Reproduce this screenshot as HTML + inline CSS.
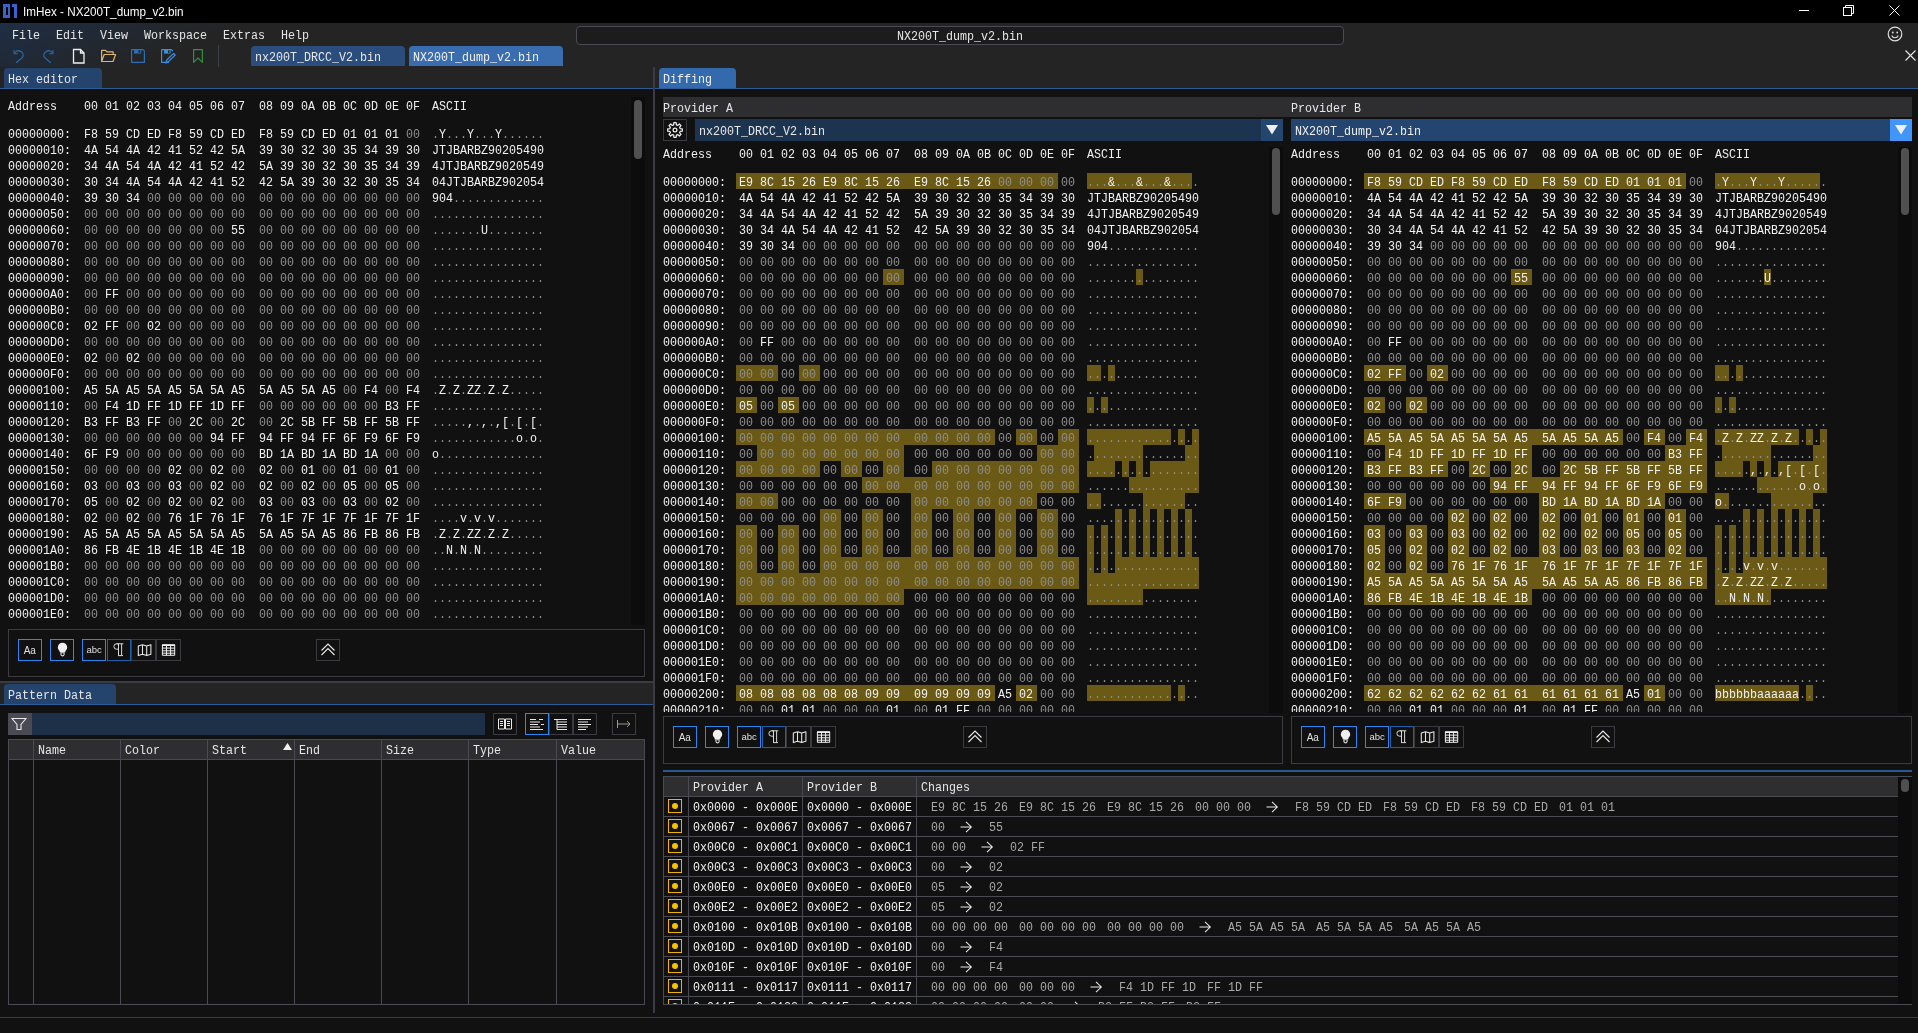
<!DOCTYPE html><html><head><meta charset="utf-8"><style>
html,body{margin:0;padding:0;}
body{width:1918px;height:1033px;overflow:hidden;background:#111111;position:relative;}
.m{position:absolute;font-family:"Liberation Mono",monospace;font-size:13.66px;line-height:16px;white-space:pre;transform:scaleX(0.854);transform-origin:0 0;}
.s{position:absolute;font-family:"Liberation Sans",sans-serif;line-height:16px;white-space:pre;}
div{box-sizing:border-box;}
svg{position:absolute;overflow:visible;}
</style></head><body><div style="position:absolute;left:0;top:0;width:1918px;height:1033px;overflow:hidden;will-change:transform">
<div style="position:absolute;left:0px;top:0px;width:1918px;height:23px;background:#000"></div>
<svg style="left:0;top:0" width="24" height="23"><path d="M3 4h7v14h-7z M6 7v8h2v-8z" fill="#3a62cc" fill-rule="evenodd"/><path d="M12 4h5v14h-3v-11h-2z" fill="#3a62cc"/></svg>
<div class="s" style="left:23px;top:3.5px;font-size:13px;color:#fff;transform:scaleX(0.9);transform-origin:0 0;">ImHex - NX200T_dump_v2.bin</div>
<div style="position:absolute;left:1799px;top:10px;width:10px;height:1px;background:#fff"></div>
<svg style="left:1843px;top:5px" width="12" height="12"><rect x="0.5" y="2.5" width="8" height="8" fill="none" stroke="#fff"/><path d="M2.5 2.5v-2h8v8h-2" fill="none" stroke="#fff"/></svg>
<svg style="left:1889px;top:5px" width="12" height="12"><path d="M0.5 0.5l10 10M10.5 0.5l-10 10" stroke="#fff" stroke-width="1"/></svg>
<div style="position:absolute;left:0px;top:23px;width:1918px;height:44px;background:linear-gradient(160deg,#1f2e45 0px,#202a38 35px,#23272c 65px,#242424 85px)"></div>
<div class="m" style="left:12px;top:28px;color:#e6e6e6;">File</div>
<div class="m" style="left:56px;top:28px;color:#e6e6e6;">Edit</div>
<div class="m" style="left:100px;top:28px;color:#e6e6e6;">View</div>
<div class="m" style="left:144px;top:28px;color:#e6e6e6;">Workspace</div>
<div class="m" style="left:223px;top:28px;color:#e6e6e6;">Extras</div>
<div class="m" style="left:281px;top:28px;color:#e6e6e6;">Help</div>
<svg style="left:0;top:0" width="70" height="70"><g fill="none" stroke="#2a66a3" stroke-width="1.3"><path d="M14 50V53.8H17.8" stroke-width="1.1"/><path d="M14.6 53.2A4.5 4.5 0 0 1 22.6 57.4L16.2 62.8"/><path d="M53 50V53.8H49.2" stroke-width="1.1"/><path d="M52.4 53.2A4.5 4.5 0 0 0 44.4 57.4L50.8 62.8"/></g></svg>
<svg style="left:72px;top:48px" width="14" height="16"><path d="M1.5 1.5h7l3.5 3.5v10h-10.5z M8.5 1.5v3.5h3.5" fill="none" stroke="#f0f0f0" stroke-width="1.3"/></svg>
<svg style="left:0;top:0" width="210" height="70"><g fill="none" stroke-width="1.2" stroke-linejoin="round"><path d="M101.6 61.5V50.3H105.5L107 51.8H113.2V54.5 M101.6 61.5L104.2 54.5H115.6L113 61.5Z" stroke="#e0b46a"/><path d="M131.6 49.6H143L144.4 51V62.4H131.6Z" stroke="#2c6db3"/><path d="M169 62.4H161.6V49.6H171.5L173 51" stroke="#3a8fe0"/><path d="M166 63L166.8 60L173.5 53.3L175.2 55L168.5 61.7Z" stroke="#3a8fe0"/><path d="M193.6 49.6H202.4V62.4L198 58L193.6 62.4Z" stroke="#3b8a42"/></g><rect x="134" y="49.6" width="7.2" height="4" fill="#2c6db3"/><rect x="138.5" y="50.3" width="1.6" height="2.6" fill="#232425"/><rect x="164" y="49.6" width="6.5" height="4" fill="#3a8fe0"/><rect x="168" y="50.3" width="1.5" height="2.6" fill="#232425"/></svg>
<div style="position:absolute;left:218px;top:45px;width:1px;height:22px;background:#3a3f48"></div>
<div style="position:absolute;left:251px;top:46px;width:154px;height:20px;background:#2a4d7d;border-radius:4px 4px 0 0"></div>
<div class="m" style="left:255px;top:50px;color:#e8e8e8;">nx200T_DRCC_V2.bin</div>
<div style="position:absolute;left:409px;top:46px;width:154px;height:20px;background:#3a6db0;border-radius:4px 4px 0 0"></div>
<div class="m" style="left:413px;top:50px;color:#f0f0f0;">NX200T_dump_v2.bin</div>
<div style="position:absolute;left:576px;top:26px;width:768px;height:19px;border:1px solid #4a4a54;border-radius:4px;background:#1c1c1c"></div>
<div class="m" style="left:897px;top:29px;color:#e6e6e6;">NX200T_dump_v2.bin</div>
<svg style="left:1887px;top:26px" width="16" height="16"><circle cx="8" cy="8" r="6.8" fill="none" stroke="#e0e0e0" stroke-width="1.2"/><circle cx="5.8" cy="6.5" r="0.9" fill="#e0e0e0"/><circle cx="10.2" cy="6.5" r="0.9" fill="#e0e0e0"/><path d="M4.8 9.5a3.4 3.4 0 0 0 6.4 0" fill="none" stroke="#e0e0e0" stroke-width="1.1"/></svg>
<svg style="left:1905px;top:50px" width="12" height="12"><path d="M0.5 0.5l10 10M10.5 0.5l-10 10" stroke="#e8e8e8" stroke-width="1.1"/></svg>
<div style="position:absolute;left:0px;top:67px;width:1918px;height:21px;background:#242424"></div>
<div style="position:absolute;left:0px;top:88px;width:1918px;height:1px;background:#2a5d98"></div>
<div style="position:absolute;left:4px;top:68px;width:98px;height:20px;background:#24446e;border-radius:4px 4px 0 0"></div>
<div class="m" style="left:8px;top:72px;color:#e6e6e6;">Hex editor</div>
<div style="position:absolute;left:659px;top:68px;width:77px;height:20px;background:#3369ad;border-radius:4px 4px 0 0"></div>
<div class="m" style="left:663px;top:71.5px;color:#f0f0f0;">Diffing</div>
<div style="position:absolute;left:653px;top:67px;width:2px;height:946px;background:#3b3b45"></div>
<div class="m" style="left:8px;top:99px;color:#f0f0f0;">Address</div>
<div class="m" style="left:84px;top:99px;color:#f0f0f0;">00 01 02 03 04 05 06 07  08 09 0A 0B 0C 0D 0E 0F</div>
<div class="m" style="left:432px;top:99px;color:#f0f0f0;">ASCII</div>
<div class="m" style="left:8px;top:127px;color:#f2f2f2;">00000000:</div>
<div class="m" style="left:84px;top:127px;color:#f2f2f2;"><span style="color:#f2f2f2">F8</span> <span style="color:#f2f2f2">59</span> <span style="color:#f2f2f2">CD</span> <span style="color:#f2f2f2">ED</span> <span style="color:#f2f2f2">F8</span> <span style="color:#f2f2f2">59</span> <span style="color:#f2f2f2">CD</span> <span style="color:#f2f2f2">ED</span>  <span style="color:#f2f2f2">F8</span> <span style="color:#f2f2f2">59</span> <span style="color:#f2f2f2">CD</span> <span style="color:#f2f2f2">ED</span> <span style="color:#f2f2f2">01</span> <span style="color:#f2f2f2">01</span> <span style="color:#f2f2f2">01</span> <span style="color:#8e8e8e">00</span></div>
<div class="m" style="left:432px;top:127px;color:#f2f2f2;"><span style="color:#8e8e8e">.</span><span style="color:#f2f2f2">Y</span><span style="color:#8e8e8e">...</span><span style="color:#f2f2f2">Y</span><span style="color:#8e8e8e">...</span><span style="color:#f2f2f2">Y</span><span style="color:#8e8e8e">......</span></div>
<div class="m" style="left:8px;top:143px;color:#f2f2f2;">00000010:</div>
<div class="m" style="left:84px;top:143px;color:#f2f2f2;"><span style="color:#f2f2f2">4A</span> <span style="color:#f2f2f2">54</span> <span style="color:#f2f2f2">4A</span> <span style="color:#f2f2f2">42</span> <span style="color:#f2f2f2">41</span> <span style="color:#f2f2f2">52</span> <span style="color:#f2f2f2">42</span> <span style="color:#f2f2f2">5A</span>  <span style="color:#f2f2f2">39</span> <span style="color:#f2f2f2">30</span> <span style="color:#f2f2f2">32</span> <span style="color:#f2f2f2">30</span> <span style="color:#f2f2f2">35</span> <span style="color:#f2f2f2">34</span> <span style="color:#f2f2f2">39</span> <span style="color:#f2f2f2">30</span></div>
<div class="m" style="left:432px;top:143px;color:#f2f2f2;"><span style="color:#f2f2f2">JTJBARBZ90205490</span></div>
<div class="m" style="left:8px;top:159px;color:#f2f2f2;">00000020:</div>
<div class="m" style="left:84px;top:159px;color:#f2f2f2;"><span style="color:#f2f2f2">34</span> <span style="color:#f2f2f2">4A</span> <span style="color:#f2f2f2">54</span> <span style="color:#f2f2f2">4A</span> <span style="color:#f2f2f2">42</span> <span style="color:#f2f2f2">41</span> <span style="color:#f2f2f2">52</span> <span style="color:#f2f2f2">42</span>  <span style="color:#f2f2f2">5A</span> <span style="color:#f2f2f2">39</span> <span style="color:#f2f2f2">30</span> <span style="color:#f2f2f2">32</span> <span style="color:#f2f2f2">30</span> <span style="color:#f2f2f2">35</span> <span style="color:#f2f2f2">34</span> <span style="color:#f2f2f2">39</span></div>
<div class="m" style="left:432px;top:159px;color:#f2f2f2;"><span style="color:#f2f2f2">4JTJBARBZ9020549</span></div>
<div class="m" style="left:8px;top:175px;color:#f2f2f2;">00000030:</div>
<div class="m" style="left:84px;top:175px;color:#f2f2f2;"><span style="color:#f2f2f2">30</span> <span style="color:#f2f2f2">34</span> <span style="color:#f2f2f2">4A</span> <span style="color:#f2f2f2">54</span> <span style="color:#f2f2f2">4A</span> <span style="color:#f2f2f2">42</span> <span style="color:#f2f2f2">41</span> <span style="color:#f2f2f2">52</span>  <span style="color:#f2f2f2">42</span> <span style="color:#f2f2f2">5A</span> <span style="color:#f2f2f2">39</span> <span style="color:#f2f2f2">30</span> <span style="color:#f2f2f2">32</span> <span style="color:#f2f2f2">30</span> <span style="color:#f2f2f2">35</span> <span style="color:#f2f2f2">34</span></div>
<div class="m" style="left:432px;top:175px;color:#f2f2f2;"><span style="color:#f2f2f2">04JTJBARBZ902054</span></div>
<div class="m" style="left:8px;top:191px;color:#f2f2f2;">00000040:</div>
<div class="m" style="left:84px;top:191px;color:#f2f2f2;"><span style="color:#f2f2f2">39</span> <span style="color:#f2f2f2">30</span> <span style="color:#f2f2f2">34</span> <span style="color:#8e8e8e">00</span> <span style="color:#8e8e8e">00</span> <span style="color:#8e8e8e">00</span> <span style="color:#8e8e8e">00</span> <span style="color:#8e8e8e">00</span>  <span style="color:#8e8e8e">00</span> <span style="color:#8e8e8e">00</span> <span style="color:#8e8e8e">00</span> <span style="color:#8e8e8e">00</span> <span style="color:#8e8e8e">00</span> <span style="color:#8e8e8e">00</span> <span style="color:#8e8e8e">00</span> <span style="color:#8e8e8e">00</span></div>
<div class="m" style="left:432px;top:191px;color:#f2f2f2;"><span style="color:#f2f2f2">904</span><span style="color:#8e8e8e">.............</span></div>
<div class="m" style="left:8px;top:207px;color:#f2f2f2;">00000050:</div>
<div class="m" style="left:84px;top:207px;color:#f2f2f2;"><span style="color:#8e8e8e">00</span> <span style="color:#8e8e8e">00</span> <span style="color:#8e8e8e">00</span> <span style="color:#8e8e8e">00</span> <span style="color:#8e8e8e">00</span> <span style="color:#8e8e8e">00</span> <span style="color:#8e8e8e">00</span> <span style="color:#8e8e8e">00</span>  <span style="color:#8e8e8e">00</span> <span style="color:#8e8e8e">00</span> <span style="color:#8e8e8e">00</span> <span style="color:#8e8e8e">00</span> <span style="color:#8e8e8e">00</span> <span style="color:#8e8e8e">00</span> <span style="color:#8e8e8e">00</span> <span style="color:#8e8e8e">00</span></div>
<div class="m" style="left:432px;top:207px;color:#f2f2f2;"><span style="color:#8e8e8e">................</span></div>
<div class="m" style="left:8px;top:223px;color:#f2f2f2;">00000060:</div>
<div class="m" style="left:84px;top:223px;color:#f2f2f2;"><span style="color:#8e8e8e">00</span> <span style="color:#8e8e8e">00</span> <span style="color:#8e8e8e">00</span> <span style="color:#8e8e8e">00</span> <span style="color:#8e8e8e">00</span> <span style="color:#8e8e8e">00</span> <span style="color:#8e8e8e">00</span> <span style="color:#f2f2f2">55</span>  <span style="color:#8e8e8e">00</span> <span style="color:#8e8e8e">00</span> <span style="color:#8e8e8e">00</span> <span style="color:#8e8e8e">00</span> <span style="color:#8e8e8e">00</span> <span style="color:#8e8e8e">00</span> <span style="color:#8e8e8e">00</span> <span style="color:#8e8e8e">00</span></div>
<div class="m" style="left:432px;top:223px;color:#f2f2f2;"><span style="color:#8e8e8e">.......</span><span style="color:#f2f2f2">U</span><span style="color:#8e8e8e">........</span></div>
<div class="m" style="left:8px;top:239px;color:#f2f2f2;">00000070:</div>
<div class="m" style="left:84px;top:239px;color:#f2f2f2;"><span style="color:#8e8e8e">00</span> <span style="color:#8e8e8e">00</span> <span style="color:#8e8e8e">00</span> <span style="color:#8e8e8e">00</span> <span style="color:#8e8e8e">00</span> <span style="color:#8e8e8e">00</span> <span style="color:#8e8e8e">00</span> <span style="color:#8e8e8e">00</span>  <span style="color:#8e8e8e">00</span> <span style="color:#8e8e8e">00</span> <span style="color:#8e8e8e">00</span> <span style="color:#8e8e8e">00</span> <span style="color:#8e8e8e">00</span> <span style="color:#8e8e8e">00</span> <span style="color:#8e8e8e">00</span> <span style="color:#8e8e8e">00</span></div>
<div class="m" style="left:432px;top:239px;color:#f2f2f2;"><span style="color:#8e8e8e">................</span></div>
<div class="m" style="left:8px;top:255px;color:#f2f2f2;">00000080:</div>
<div class="m" style="left:84px;top:255px;color:#f2f2f2;"><span style="color:#8e8e8e">00</span> <span style="color:#8e8e8e">00</span> <span style="color:#8e8e8e">00</span> <span style="color:#8e8e8e">00</span> <span style="color:#8e8e8e">00</span> <span style="color:#8e8e8e">00</span> <span style="color:#8e8e8e">00</span> <span style="color:#8e8e8e">00</span>  <span style="color:#8e8e8e">00</span> <span style="color:#8e8e8e">00</span> <span style="color:#8e8e8e">00</span> <span style="color:#8e8e8e">00</span> <span style="color:#8e8e8e">00</span> <span style="color:#8e8e8e">00</span> <span style="color:#8e8e8e">00</span> <span style="color:#8e8e8e">00</span></div>
<div class="m" style="left:432px;top:255px;color:#f2f2f2;"><span style="color:#8e8e8e">................</span></div>
<div class="m" style="left:8px;top:271px;color:#f2f2f2;">00000090:</div>
<div class="m" style="left:84px;top:271px;color:#f2f2f2;"><span style="color:#8e8e8e">00</span> <span style="color:#8e8e8e">00</span> <span style="color:#8e8e8e">00</span> <span style="color:#8e8e8e">00</span> <span style="color:#8e8e8e">00</span> <span style="color:#8e8e8e">00</span> <span style="color:#8e8e8e">00</span> <span style="color:#8e8e8e">00</span>  <span style="color:#8e8e8e">00</span> <span style="color:#8e8e8e">00</span> <span style="color:#8e8e8e">00</span> <span style="color:#8e8e8e">00</span> <span style="color:#8e8e8e">00</span> <span style="color:#8e8e8e">00</span> <span style="color:#8e8e8e">00</span> <span style="color:#8e8e8e">00</span></div>
<div class="m" style="left:432px;top:271px;color:#f2f2f2;"><span style="color:#8e8e8e">................</span></div>
<div class="m" style="left:8px;top:287px;color:#f2f2f2;">000000A0:</div>
<div class="m" style="left:84px;top:287px;color:#f2f2f2;"><span style="color:#8e8e8e">00</span> <span style="color:#f2f2f2">FF</span> <span style="color:#8e8e8e">00</span> <span style="color:#8e8e8e">00</span> <span style="color:#8e8e8e">00</span> <span style="color:#8e8e8e">00</span> <span style="color:#8e8e8e">00</span> <span style="color:#8e8e8e">00</span>  <span style="color:#8e8e8e">00</span> <span style="color:#8e8e8e">00</span> <span style="color:#8e8e8e">00</span> <span style="color:#8e8e8e">00</span> <span style="color:#8e8e8e">00</span> <span style="color:#8e8e8e">00</span> <span style="color:#8e8e8e">00</span> <span style="color:#8e8e8e">00</span></div>
<div class="m" style="left:432px;top:287px;color:#f2f2f2;"><span style="color:#8e8e8e">................</span></div>
<div class="m" style="left:8px;top:303px;color:#f2f2f2;">000000B0:</div>
<div class="m" style="left:84px;top:303px;color:#f2f2f2;"><span style="color:#8e8e8e">00</span> <span style="color:#8e8e8e">00</span> <span style="color:#8e8e8e">00</span> <span style="color:#8e8e8e">00</span> <span style="color:#8e8e8e">00</span> <span style="color:#8e8e8e">00</span> <span style="color:#8e8e8e">00</span> <span style="color:#8e8e8e">00</span>  <span style="color:#8e8e8e">00</span> <span style="color:#8e8e8e">00</span> <span style="color:#8e8e8e">00</span> <span style="color:#8e8e8e">00</span> <span style="color:#8e8e8e">00</span> <span style="color:#8e8e8e">00</span> <span style="color:#8e8e8e">00</span> <span style="color:#8e8e8e">00</span></div>
<div class="m" style="left:432px;top:303px;color:#f2f2f2;"><span style="color:#8e8e8e">................</span></div>
<div class="m" style="left:8px;top:319px;color:#f2f2f2;">000000C0:</div>
<div class="m" style="left:84px;top:319px;color:#f2f2f2;"><span style="color:#f2f2f2">02</span> <span style="color:#f2f2f2">FF</span> <span style="color:#8e8e8e">00</span> <span style="color:#f2f2f2">02</span> <span style="color:#8e8e8e">00</span> <span style="color:#8e8e8e">00</span> <span style="color:#8e8e8e">00</span> <span style="color:#8e8e8e">00</span>  <span style="color:#8e8e8e">00</span> <span style="color:#8e8e8e">00</span> <span style="color:#8e8e8e">00</span> <span style="color:#8e8e8e">00</span> <span style="color:#8e8e8e">00</span> <span style="color:#8e8e8e">00</span> <span style="color:#8e8e8e">00</span> <span style="color:#8e8e8e">00</span></div>
<div class="m" style="left:432px;top:319px;color:#f2f2f2;"><span style="color:#8e8e8e">................</span></div>
<div class="m" style="left:8px;top:335px;color:#f2f2f2;">000000D0:</div>
<div class="m" style="left:84px;top:335px;color:#f2f2f2;"><span style="color:#8e8e8e">00</span> <span style="color:#8e8e8e">00</span> <span style="color:#8e8e8e">00</span> <span style="color:#8e8e8e">00</span> <span style="color:#8e8e8e">00</span> <span style="color:#8e8e8e">00</span> <span style="color:#8e8e8e">00</span> <span style="color:#8e8e8e">00</span>  <span style="color:#8e8e8e">00</span> <span style="color:#8e8e8e">00</span> <span style="color:#8e8e8e">00</span> <span style="color:#8e8e8e">00</span> <span style="color:#8e8e8e">00</span> <span style="color:#8e8e8e">00</span> <span style="color:#8e8e8e">00</span> <span style="color:#8e8e8e">00</span></div>
<div class="m" style="left:432px;top:335px;color:#f2f2f2;"><span style="color:#8e8e8e">................</span></div>
<div class="m" style="left:8px;top:351px;color:#f2f2f2;">000000E0:</div>
<div class="m" style="left:84px;top:351px;color:#f2f2f2;"><span style="color:#f2f2f2">02</span> <span style="color:#8e8e8e">00</span> <span style="color:#f2f2f2">02</span> <span style="color:#8e8e8e">00</span> <span style="color:#8e8e8e">00</span> <span style="color:#8e8e8e">00</span> <span style="color:#8e8e8e">00</span> <span style="color:#8e8e8e">00</span>  <span style="color:#8e8e8e">00</span> <span style="color:#8e8e8e">00</span> <span style="color:#8e8e8e">00</span> <span style="color:#8e8e8e">00</span> <span style="color:#8e8e8e">00</span> <span style="color:#8e8e8e">00</span> <span style="color:#8e8e8e">00</span> <span style="color:#8e8e8e">00</span></div>
<div class="m" style="left:432px;top:351px;color:#f2f2f2;"><span style="color:#8e8e8e">................</span></div>
<div class="m" style="left:8px;top:367px;color:#f2f2f2;">000000F0:</div>
<div class="m" style="left:84px;top:367px;color:#f2f2f2;"><span style="color:#8e8e8e">00</span> <span style="color:#8e8e8e">00</span> <span style="color:#8e8e8e">00</span> <span style="color:#8e8e8e">00</span> <span style="color:#8e8e8e">00</span> <span style="color:#8e8e8e">00</span> <span style="color:#8e8e8e">00</span> <span style="color:#8e8e8e">00</span>  <span style="color:#8e8e8e">00</span> <span style="color:#8e8e8e">00</span> <span style="color:#8e8e8e">00</span> <span style="color:#8e8e8e">00</span> <span style="color:#8e8e8e">00</span> <span style="color:#8e8e8e">00</span> <span style="color:#8e8e8e">00</span> <span style="color:#8e8e8e">00</span></div>
<div class="m" style="left:432px;top:367px;color:#f2f2f2;"><span style="color:#8e8e8e">................</span></div>
<div class="m" style="left:8px;top:383px;color:#f2f2f2;">00000100:</div>
<div class="m" style="left:84px;top:383px;color:#f2f2f2;"><span style="color:#f2f2f2">A5</span> <span style="color:#f2f2f2">5A</span> <span style="color:#f2f2f2">A5</span> <span style="color:#f2f2f2">5A</span> <span style="color:#f2f2f2">A5</span> <span style="color:#f2f2f2">5A</span> <span style="color:#f2f2f2">5A</span> <span style="color:#f2f2f2">A5</span>  <span style="color:#f2f2f2">5A</span> <span style="color:#f2f2f2">A5</span> <span style="color:#f2f2f2">5A</span> <span style="color:#f2f2f2">A5</span> <span style="color:#8e8e8e">00</span> <span style="color:#f2f2f2">F4</span> <span style="color:#8e8e8e">00</span> <span style="color:#f2f2f2">F4</span></div>
<div class="m" style="left:432px;top:383px;color:#f2f2f2;"><span style="color:#8e8e8e">.</span><span style="color:#f2f2f2">Z</span><span style="color:#8e8e8e">.</span><span style="color:#f2f2f2">Z</span><span style="color:#8e8e8e">.</span><span style="color:#f2f2f2">ZZ</span><span style="color:#8e8e8e">.</span><span style="color:#f2f2f2">Z</span><span style="color:#8e8e8e">.</span><span style="color:#f2f2f2">Z</span><span style="color:#8e8e8e">.....</span></div>
<div class="m" style="left:8px;top:399px;color:#f2f2f2;">00000110:</div>
<div class="m" style="left:84px;top:399px;color:#f2f2f2;"><span style="color:#8e8e8e">00</span> <span style="color:#f2f2f2">F4</span> <span style="color:#f2f2f2">1D</span> <span style="color:#f2f2f2">FF</span> <span style="color:#f2f2f2">1D</span> <span style="color:#f2f2f2">FF</span> <span style="color:#f2f2f2">1D</span> <span style="color:#f2f2f2">FF</span>  <span style="color:#8e8e8e">00</span> <span style="color:#8e8e8e">00</span> <span style="color:#8e8e8e">00</span> <span style="color:#8e8e8e">00</span> <span style="color:#8e8e8e">00</span> <span style="color:#8e8e8e">00</span> <span style="color:#f2f2f2">B3</span> <span style="color:#f2f2f2">FF</span></div>
<div class="m" style="left:432px;top:399px;color:#f2f2f2;"><span style="color:#8e8e8e">................</span></div>
<div class="m" style="left:8px;top:415px;color:#f2f2f2;">00000120:</div>
<div class="m" style="left:84px;top:415px;color:#f2f2f2;"><span style="color:#f2f2f2">B3</span> <span style="color:#f2f2f2">FF</span> <span style="color:#f2f2f2">B3</span> <span style="color:#f2f2f2">FF</span> <span style="color:#8e8e8e">00</span> <span style="color:#f2f2f2">2C</span> <span style="color:#8e8e8e">00</span> <span style="color:#f2f2f2">2C</span>  <span style="color:#8e8e8e">00</span> <span style="color:#f2f2f2">2C</span> <span style="color:#f2f2f2">5B</span> <span style="color:#f2f2f2">FF</span> <span style="color:#f2f2f2">5B</span> <span style="color:#f2f2f2">FF</span> <span style="color:#f2f2f2">5B</span> <span style="color:#f2f2f2">FF</span></div>
<div class="m" style="left:432px;top:415px;color:#f2f2f2;"><span style="color:#8e8e8e">.....</span><span style="color:#f2f2f2">,</span><span style="color:#8e8e8e">.</span><span style="color:#f2f2f2">,</span><span style="color:#8e8e8e">.</span><span style="color:#f2f2f2">,[</span><span style="color:#8e8e8e">.</span><span style="color:#f2f2f2">[</span><span style="color:#8e8e8e">.</span><span style="color:#f2f2f2">[</span><span style="color:#8e8e8e">.</span></div>
<div class="m" style="left:8px;top:431px;color:#f2f2f2;">00000130:</div>
<div class="m" style="left:84px;top:431px;color:#f2f2f2;"><span style="color:#8e8e8e">00</span> <span style="color:#8e8e8e">00</span> <span style="color:#8e8e8e">00</span> <span style="color:#8e8e8e">00</span> <span style="color:#8e8e8e">00</span> <span style="color:#8e8e8e">00</span> <span style="color:#f2f2f2">94</span> <span style="color:#f2f2f2">FF</span>  <span style="color:#f2f2f2">94</span> <span style="color:#f2f2f2">FF</span> <span style="color:#f2f2f2">94</span> <span style="color:#f2f2f2">FF</span> <span style="color:#f2f2f2">6F</span> <span style="color:#f2f2f2">F9</span> <span style="color:#f2f2f2">6F</span> <span style="color:#f2f2f2">F9</span></div>
<div class="m" style="left:432px;top:431px;color:#f2f2f2;"><span style="color:#8e8e8e">............</span><span style="color:#f2f2f2">o</span><span style="color:#8e8e8e">.</span><span style="color:#f2f2f2">o</span><span style="color:#8e8e8e">.</span></div>
<div class="m" style="left:8px;top:447px;color:#f2f2f2;">00000140:</div>
<div class="m" style="left:84px;top:447px;color:#f2f2f2;"><span style="color:#f2f2f2">6F</span> <span style="color:#f2f2f2">F9</span> <span style="color:#8e8e8e">00</span> <span style="color:#8e8e8e">00</span> <span style="color:#8e8e8e">00</span> <span style="color:#8e8e8e">00</span> <span style="color:#8e8e8e">00</span> <span style="color:#8e8e8e">00</span>  <span style="color:#f2f2f2">BD</span> <span style="color:#f2f2f2">1A</span> <span style="color:#f2f2f2">BD</span> <span style="color:#f2f2f2">1A</span> <span style="color:#f2f2f2">BD</span> <span style="color:#f2f2f2">1A</span> <span style="color:#8e8e8e">00</span> <span style="color:#8e8e8e">00</span></div>
<div class="m" style="left:432px;top:447px;color:#f2f2f2;"><span style="color:#f2f2f2">o</span><span style="color:#8e8e8e">...............</span></div>
<div class="m" style="left:8px;top:463px;color:#f2f2f2;">00000150:</div>
<div class="m" style="left:84px;top:463px;color:#f2f2f2;"><span style="color:#8e8e8e">00</span> <span style="color:#8e8e8e">00</span> <span style="color:#8e8e8e">00</span> <span style="color:#8e8e8e">00</span> <span style="color:#f2f2f2">02</span> <span style="color:#8e8e8e">00</span> <span style="color:#f2f2f2">02</span> <span style="color:#8e8e8e">00</span>  <span style="color:#f2f2f2">02</span> <span style="color:#8e8e8e">00</span> <span style="color:#f2f2f2">01</span> <span style="color:#8e8e8e">00</span> <span style="color:#f2f2f2">01</span> <span style="color:#8e8e8e">00</span> <span style="color:#f2f2f2">01</span> <span style="color:#8e8e8e">00</span></div>
<div class="m" style="left:432px;top:463px;color:#f2f2f2;"><span style="color:#8e8e8e">................</span></div>
<div class="m" style="left:8px;top:479px;color:#f2f2f2;">00000160:</div>
<div class="m" style="left:84px;top:479px;color:#f2f2f2;"><span style="color:#f2f2f2">03</span> <span style="color:#8e8e8e">00</span> <span style="color:#f2f2f2">03</span> <span style="color:#8e8e8e">00</span> <span style="color:#f2f2f2">03</span> <span style="color:#8e8e8e">00</span> <span style="color:#f2f2f2">02</span> <span style="color:#8e8e8e">00</span>  <span style="color:#f2f2f2">02</span> <span style="color:#8e8e8e">00</span> <span style="color:#f2f2f2">02</span> <span style="color:#8e8e8e">00</span> <span style="color:#f2f2f2">05</span> <span style="color:#8e8e8e">00</span> <span style="color:#f2f2f2">05</span> <span style="color:#8e8e8e">00</span></div>
<div class="m" style="left:432px;top:479px;color:#f2f2f2;"><span style="color:#8e8e8e">................</span></div>
<div class="m" style="left:8px;top:495px;color:#f2f2f2;">00000170:</div>
<div class="m" style="left:84px;top:495px;color:#f2f2f2;"><span style="color:#f2f2f2">05</span> <span style="color:#8e8e8e">00</span> <span style="color:#f2f2f2">02</span> <span style="color:#8e8e8e">00</span> <span style="color:#f2f2f2">02</span> <span style="color:#8e8e8e">00</span> <span style="color:#f2f2f2">02</span> <span style="color:#8e8e8e">00</span>  <span style="color:#f2f2f2">03</span> <span style="color:#8e8e8e">00</span> <span style="color:#f2f2f2">03</span> <span style="color:#8e8e8e">00</span> <span style="color:#f2f2f2">03</span> <span style="color:#8e8e8e">00</span> <span style="color:#f2f2f2">02</span> <span style="color:#8e8e8e">00</span></div>
<div class="m" style="left:432px;top:495px;color:#f2f2f2;"><span style="color:#8e8e8e">................</span></div>
<div class="m" style="left:8px;top:511px;color:#f2f2f2;">00000180:</div>
<div class="m" style="left:84px;top:511px;color:#f2f2f2;"><span style="color:#f2f2f2">02</span> <span style="color:#8e8e8e">00</span> <span style="color:#f2f2f2">02</span> <span style="color:#8e8e8e">00</span> <span style="color:#f2f2f2">76</span> <span style="color:#f2f2f2">1F</span> <span style="color:#f2f2f2">76</span> <span style="color:#f2f2f2">1F</span>  <span style="color:#f2f2f2">76</span> <span style="color:#f2f2f2">1F</span> <span style="color:#f2f2f2">7F</span> <span style="color:#f2f2f2">1F</span> <span style="color:#f2f2f2">7F</span> <span style="color:#f2f2f2">1F</span> <span style="color:#f2f2f2">7F</span> <span style="color:#f2f2f2">1F</span></div>
<div class="m" style="left:432px;top:511px;color:#f2f2f2;"><span style="color:#8e8e8e">....</span><span style="color:#f2f2f2">v</span><span style="color:#8e8e8e">.</span><span style="color:#f2f2f2">v</span><span style="color:#8e8e8e">.</span><span style="color:#f2f2f2">v</span><span style="color:#8e8e8e">.......</span></div>
<div class="m" style="left:8px;top:527px;color:#f2f2f2;">00000190:</div>
<div class="m" style="left:84px;top:527px;color:#f2f2f2;"><span style="color:#f2f2f2">A5</span> <span style="color:#f2f2f2">5A</span> <span style="color:#f2f2f2">A5</span> <span style="color:#f2f2f2">5A</span> <span style="color:#f2f2f2">A5</span> <span style="color:#f2f2f2">5A</span> <span style="color:#f2f2f2">5A</span> <span style="color:#f2f2f2">A5</span>  <span style="color:#f2f2f2">5A</span> <span style="color:#f2f2f2">A5</span> <span style="color:#f2f2f2">5A</span> <span style="color:#f2f2f2">A5</span> <span style="color:#f2f2f2">86</span> <span style="color:#f2f2f2">FB</span> <span style="color:#f2f2f2">86</span> <span style="color:#f2f2f2">FB</span></div>
<div class="m" style="left:432px;top:527px;color:#f2f2f2;"><span style="color:#8e8e8e">.</span><span style="color:#f2f2f2">Z</span><span style="color:#8e8e8e">.</span><span style="color:#f2f2f2">Z</span><span style="color:#8e8e8e">.</span><span style="color:#f2f2f2">ZZ</span><span style="color:#8e8e8e">.</span><span style="color:#f2f2f2">Z</span><span style="color:#8e8e8e">.</span><span style="color:#f2f2f2">Z</span><span style="color:#8e8e8e">.....</span></div>
<div class="m" style="left:8px;top:543px;color:#f2f2f2;">000001A0:</div>
<div class="m" style="left:84px;top:543px;color:#f2f2f2;"><span style="color:#f2f2f2">86</span> <span style="color:#f2f2f2">FB</span> <span style="color:#f2f2f2">4E</span> <span style="color:#f2f2f2">1B</span> <span style="color:#f2f2f2">4E</span> <span style="color:#f2f2f2">1B</span> <span style="color:#f2f2f2">4E</span> <span style="color:#f2f2f2">1B</span>  <span style="color:#8e8e8e">00</span> <span style="color:#8e8e8e">00</span> <span style="color:#8e8e8e">00</span> <span style="color:#8e8e8e">00</span> <span style="color:#8e8e8e">00</span> <span style="color:#8e8e8e">00</span> <span style="color:#8e8e8e">00</span> <span style="color:#8e8e8e">00</span></div>
<div class="m" style="left:432px;top:543px;color:#f2f2f2;"><span style="color:#8e8e8e">..</span><span style="color:#f2f2f2">N</span><span style="color:#8e8e8e">.</span><span style="color:#f2f2f2">N</span><span style="color:#8e8e8e">.</span><span style="color:#f2f2f2">N</span><span style="color:#8e8e8e">.........</span></div>
<div class="m" style="left:8px;top:559px;color:#f2f2f2;">000001B0:</div>
<div class="m" style="left:84px;top:559px;color:#f2f2f2;"><span style="color:#8e8e8e">00</span> <span style="color:#8e8e8e">00</span> <span style="color:#8e8e8e">00</span> <span style="color:#8e8e8e">00</span> <span style="color:#8e8e8e">00</span> <span style="color:#8e8e8e">00</span> <span style="color:#8e8e8e">00</span> <span style="color:#8e8e8e">00</span>  <span style="color:#8e8e8e">00</span> <span style="color:#8e8e8e">00</span> <span style="color:#8e8e8e">00</span> <span style="color:#8e8e8e">00</span> <span style="color:#8e8e8e">00</span> <span style="color:#8e8e8e">00</span> <span style="color:#8e8e8e">00</span> <span style="color:#8e8e8e">00</span></div>
<div class="m" style="left:432px;top:559px;color:#f2f2f2;"><span style="color:#8e8e8e">................</span></div>
<div class="m" style="left:8px;top:575px;color:#f2f2f2;">000001C0:</div>
<div class="m" style="left:84px;top:575px;color:#f2f2f2;"><span style="color:#8e8e8e">00</span> <span style="color:#8e8e8e">00</span> <span style="color:#8e8e8e">00</span> <span style="color:#8e8e8e">00</span> <span style="color:#8e8e8e">00</span> <span style="color:#8e8e8e">00</span> <span style="color:#8e8e8e">00</span> <span style="color:#8e8e8e">00</span>  <span style="color:#8e8e8e">00</span> <span style="color:#8e8e8e">00</span> <span style="color:#8e8e8e">00</span> <span style="color:#8e8e8e">00</span> <span style="color:#8e8e8e">00</span> <span style="color:#8e8e8e">00</span> <span style="color:#8e8e8e">00</span> <span style="color:#8e8e8e">00</span></div>
<div class="m" style="left:432px;top:575px;color:#f2f2f2;"><span style="color:#8e8e8e">................</span></div>
<div class="m" style="left:8px;top:591px;color:#f2f2f2;">000001D0:</div>
<div class="m" style="left:84px;top:591px;color:#f2f2f2;"><span style="color:#8e8e8e">00</span> <span style="color:#8e8e8e">00</span> <span style="color:#8e8e8e">00</span> <span style="color:#8e8e8e">00</span> <span style="color:#8e8e8e">00</span> <span style="color:#8e8e8e">00</span> <span style="color:#8e8e8e">00</span> <span style="color:#8e8e8e">00</span>  <span style="color:#8e8e8e">00</span> <span style="color:#8e8e8e">00</span> <span style="color:#8e8e8e">00</span> <span style="color:#8e8e8e">00</span> <span style="color:#8e8e8e">00</span> <span style="color:#8e8e8e">00</span> <span style="color:#8e8e8e">00</span> <span style="color:#8e8e8e">00</span></div>
<div class="m" style="left:432px;top:591px;color:#f2f2f2;"><span style="color:#8e8e8e">................</span></div>
<div class="m" style="left:8px;top:607px;color:#f2f2f2;">000001E0:</div>
<div class="m" style="left:84px;top:607px;color:#f2f2f2;"><span style="color:#8e8e8e">00</span> <span style="color:#8e8e8e">00</span> <span style="color:#8e8e8e">00</span> <span style="color:#8e8e8e">00</span> <span style="color:#8e8e8e">00</span> <span style="color:#8e8e8e">00</span> <span style="color:#8e8e8e">00</span> <span style="color:#8e8e8e">00</span>  <span style="color:#8e8e8e">00</span> <span style="color:#8e8e8e">00</span> <span style="color:#8e8e8e">00</span> <span style="color:#8e8e8e">00</span> <span style="color:#8e8e8e">00</span> <span style="color:#8e8e8e">00</span> <span style="color:#8e8e8e">00</span> <span style="color:#8e8e8e">00</span></div>
<div class="m" style="left:432px;top:607px;color:#f2f2f2;"><span style="color:#8e8e8e">................</span></div>
<div style="position:absolute;left:631px;top:97px;width:14px;height:528px;background:#0c0c0c"></div>
<div style="position:absolute;left:634px;top:100px;width:8px;height:59px;background:#505050;border-radius:4px"></div>
<div style="position:absolute;left:8px;top:629px;width:637px;height:48px;border:1px solid #3c3c42"></div>
<div style="position:absolute;left:18px;top:639px;width:24px;height:22px;border:1px solid #2f86f0"></div>
<div class="s" style="left:23.7px;top:642.5px;font-size:10px;color:#e0e0e0;">Aa</div>
<div style="position:absolute;left:50px;top:639px;width:24px;height:22px;border:1px solid #2f86f0"></div>
<svg style="left:50px;top:639px" width="24" height="22"><path d="M12.5 3.8a4.6 4.6 0 0 1 2.9 8.2v1.3h-5.8v-1.3a4.6 4.6 0 0 1 2.9-8.2z" fill="#f0f0f0"/><path d="M10.9 13.7h3.2v1.6a1.6 1.6 0 0 1-3.2 0z" fill="none" stroke="#e0e0e0" stroke-width="1.1"/></svg>
<div style="position:absolute;left:82px;top:639px;width:24px;height:22px;border:1px solid #2f86f0"></div>
<div class="s" style="left:86.5px;top:642px;font-size:9.5px;color:#e0e0e0;">abc</div>
<div style="position:absolute;left:107px;top:639px;width:24px;height:22px;border:1px solid #1f5ea8"></div>
<svg style="left:107px;top:639px" width="24" height="22"><path d="M11.5 4.8H9.6a2.7 2.7 0 0 0 0 5.4h1.9 M11.5 4.8V16.6 M14.6 4.8V16.6 M9.6 4.8H16.3 M11 16.6H16" fill="none" stroke="#d8d8d8" stroke-width="1"/></svg>
<div style="position:absolute;left:131px;top:639px;width:25px;height:22px;border:1px solid #3a3a40"></div>
<svg style="left:131px;top:639px" width="25" height="22"><path d="M7.3 7l4.2-1.3 4.2 1.3 4.2-1.3v9.6l-4.2 1.3-4.2-1.3-4.2 1.3z M11.5 5.7v9.6 M15.7 7v9.6" fill="none" stroke="#e8e8e8" stroke-width="1.05" stroke-linejoin="round"/></svg>
<div style="position:absolute;left:156px;top:639px;width:25px;height:22px;border:1px solid #3a3a40"></div>
<svg style="left:156px;top:639px" width="25" height="22"><path d="M6.4 5.9h12.3v10.4h-12.3z M6.4 9.1h12.3 M6.4 11.8h12.3 M6.4 14.2h12.3 M10.5 5.9v10.4 M14.6 5.9v10.4" fill="none" stroke="#f0f0f0" stroke-width="1"/><rect x="6" y="5.4" width="13" height="1.6" fill="#f0f0f0"/></svg>
<div style="position:absolute;left:316px;top:639px;width:24px;height:22px;border:1px solid #3a3a40"></div>
<svg style="left:316px;top:639px" width="24" height="22"><path d="M5.5 11.5l6.5-6.5 6.5 6.5 M5.5 16l6.5-6.5 6.5 6.5" fill="none" stroke="#e8e8e8" stroke-width="1.1"/></svg>
<div style="position:absolute;left:0px;top:681px;width:653px;height:2px;background:#3b3b45"></div>
<div style="position:absolute;left:0px;top:683px;width:653px;height:21px;background:#242424"></div>
<div style="position:absolute;left:0px;top:704px;width:653px;height:1px;background:#2a5d98"></div>
<div style="position:absolute;left:4px;top:684px;width:112px;height:20px;background:#24446e;border-radius:4px 4px 0 0"></div>
<div class="m" style="left:8px;top:688px;color:#e6e6e6;">Pattern Data</div>
<div style="position:absolute;left:8px;top:713px;width:24px;height:22px;background:#4a4a55"></div>
<svg style="left:8px;top:713px" width="24" height="22"><path d="M4 5.5H18L13 11.5V16.5H9V11.5Z" fill="none" stroke="#e8e8e8" stroke-width="1.1" stroke-linejoin="miter"/></svg>
<div style="position:absolute;left:32px;top:713px;width:453px;height:22px;background:#1e3048"></div>
<div style="position:absolute;left:493px;top:713px;width:24px;height:22px;border:1px solid #3a3a40"></div>
<div style="position:absolute;left:525px;top:713px;width:24px;height:22px;border:1px solid #2f86f0"></div>
<div style="position:absolute;left:549px;top:713px;width:24px;height:22px;border:1px solid #3a3a40"></div>
<div style="position:absolute;left:573px;top:713px;width:24px;height:22px;border:1px solid #3a3a40"></div>
<div style="position:absolute;left:612px;top:713px;width:24px;height:22px;border:1px solid #3a3a40"></div>
<svg style="left:493px;top:713px" width="24" height="22"><path d="M5.5 6h6v10h-6z M12.5 6h6v10h-6z M7 8.5h3 M7 10.5h3 M7 12.5h3 M14 8.5h3 M14 10.5h3 M14 12.5h3" fill="none" stroke="#e8e8e8" stroke-width="1"/></svg>
<svg style="left:525px;top:713px" width="24" height="22"><path d="M5 6.5h6 M5 9h10 M5 11.5h8 M5 14h10 M5 16.5h13 M14 6.5h4 M16 11.5h3" fill="none" stroke="#e8e8e8" stroke-width="1"/></svg>
<svg style="left:549px;top:713px" width="24" height="22"><path d="M5 6.5h13 M8 9h10 M8 11.5h10 M8 14h10 M8 16.5h10 M8 6.5v10" fill="none" stroke="#e8e8e8" stroke-width="1"/></svg>
<svg style="left:573px;top:713px" width="24" height="22"><path d="M5 6.5h13 M5 9h10 M5 11.5h13 M5 14h10 M5 16.5h8" fill="none" stroke="#e8e8e8" stroke-width="1"/></svg>
<svg style="left:612px;top:713px" width="24" height="22"><path d="M5.5 7v8 M6 11h12 M15 8l3 3-3 3" fill="none" stroke="#9a9a9a" stroke-width="1"/></svg>
<div style="position:absolute;left:8px;top:739px;width:637px;height:266px;border:1px solid #4a4a52"></div>
<div style="position:absolute;left:9px;top:740px;width:635px;height:20px;background:#2e2e30"></div>
<div style="position:absolute;left:9px;top:759px;width:635px;height:1px;background:#4a4a52"></div>
<div style="position:absolute;left:33px;top:740px;width:1px;height:264px;background:#4a4a52"></div>
<div style="position:absolute;left:120px;top:740px;width:1px;height:264px;background:#4a4a52"></div>
<div style="position:absolute;left:207px;top:740px;width:1px;height:264px;background:#4a4a52"></div>
<div style="position:absolute;left:294px;top:740px;width:1px;height:264px;background:#4a4a52"></div>
<div style="position:absolute;left:381px;top:740px;width:1px;height:264px;background:#4a4a52"></div>
<div style="position:absolute;left:468px;top:740px;width:1px;height:264px;background:#4a4a52"></div>
<div style="position:absolute;left:556px;top:740px;width:1px;height:264px;background:#4a4a52"></div>
<div class="m" style="left:38px;top:743px;color:#e6e6e6;">Name</div>
<div class="m" style="left:125px;top:743px;color:#e6e6e6;">Color</div>
<div class="m" style="left:212px;top:743px;color:#e6e6e6;">Start</div>
<div class="m" style="left:299px;top:743px;color:#e6e6e6;">End</div>
<div class="m" style="left:386px;top:743px;color:#e6e6e6;">Size</div>
<div class="m" style="left:473px;top:743px;color:#e6e6e6;">Type</div>
<div class="m" style="left:561px;top:743px;color:#e6e6e6;">Value</div>
<svg style="left:283px;top:743px" width="10" height="8"><path d="M0 7L4.5 0L9 7z" fill="#f0f0f0"/></svg>
<div style="position:absolute;left:0px;top:1017px;width:1918px;height:1px;background:#3b3b45"></div>
<div style="position:absolute;left:663px;top:97px;width:1249px;height:20px;background:#2e2e30"></div>
<div class="m" style="left:663px;top:101px;color:#e6e6e6;">Provider A</div>
<div class="m" style="left:1291px;top:101px;color:#e6e6e6;">Provider B</div>
<div style="position:absolute;left:663px;top:119px;width:24px;height:22px;border:1px solid #3a3a40"></div>
<svg style="left:663px;top:119px" width="24" height="22"><g transform="translate(12 11)" fill="none" stroke="#ececec" stroke-width="1.25" stroke-linejoin="round"><circle r="1.9"/><path d="M-1.37 -5.12 L-1.16 -7.31 L1.16 -7.31 L1.37 -5.12 L2.65 -4.59 L4.35 -5.99 L5.99 -4.35 L4.59 -2.65 L5.12 -1.37 L7.31 -1.16 L7.31 1.16 L5.12 1.37 L4.59 2.65 L5.99 4.35 L4.35 5.99 L2.65 4.59 L1.37 5.12 L1.16 7.31 L-1.16 7.31 L-1.37 5.12 L-2.65 4.59 L-4.35 5.99 L-5.99 4.35 L-4.59 2.65 L-5.12 1.37 L-7.31 1.16 L-7.31 -1.16 L-5.12 -1.37 L-4.59 -2.65 L-5.99 -4.35 L-4.35 -5.99 L-2.65 -4.59Z"/></g></svg>
<div style="position:absolute;left:695px;top:119px;width:566px;height:22px;background:#1d3451"></div>
<div style="position:absolute;left:1261px;top:119px;width:22px;height:22px;background:#23466f"></div>
<svg style="left:1265px;top:125px" width="14" height="10"><path d="M1 0h12L7 9.5z" fill="#f0f0f0"/></svg>
<div class="m" style="left:699px;top:123.5px;color:#e8e8e8;">nx200T_DRCC_V2.bin</div>
<div style="position:absolute;left:1291px;top:119px;width:599px;height:22px;background:#24456f"></div>
<div style="position:absolute;left:1890px;top:119px;width:22px;height:22px;background:#4296fa"></div>
<svg style="left:1894px;top:125px" width="14" height="10"><path d="M1 0h12L7 9.5z" fill="#f0f0f0"/></svg>
<div class="m" style="left:1295px;top:123.5px;color:#f0f0f0;">NX200T_dump_v2.bin</div>
<div class="m" style="left:663px;top:147px;color:#f0f0f0;">Address</div>
<div class="m" style="left:739px;top:147px;color:#f0f0f0;">00 01 02 03 04 05 06 07  08 09 0A 0B 0C 0D 0E 0F</div>
<div class="m" style="left:1087px;top:147px;color:#f0f0f0;">ASCII</div>
<div style="position:absolute;left:736px;top:173px;width:322px;height:16px;background:#6b5916"></div>
<div style="position:absolute;left:1087px;top:173px;width:105px;height:16px;background:#6b5916"></div>
<div style="position:absolute;left:883px;top:269px;width:21px;height:16px;background:#6b5916"></div>
<div style="position:absolute;left:1136px;top:269px;width:7px;height:16px;background:#6b5916"></div>
<div style="position:absolute;left:736px;top:365px;width:42px;height:16px;background:#6b5916"></div>
<div style="position:absolute;left:1087px;top:365px;width:14px;height:16px;background:#6b5916"></div>
<div style="position:absolute;left:799px;top:365px;width:21px;height:16px;background:#6b5916"></div>
<div style="position:absolute;left:1108px;top:365px;width:7px;height:16px;background:#6b5916"></div>
<div style="position:absolute;left:736px;top:397px;width:21px;height:16px;background:#6b5916"></div>
<div style="position:absolute;left:1087px;top:397px;width:7px;height:16px;background:#6b5916"></div>
<div style="position:absolute;left:778px;top:397px;width:21px;height:16px;background:#6b5916"></div>
<div style="position:absolute;left:1101px;top:397px;width:7px;height:16px;background:#6b5916"></div>
<div style="position:absolute;left:736px;top:429px;width:259px;height:16px;background:#6b5916"></div>
<div style="position:absolute;left:1087px;top:429px;width:84px;height:16px;background:#6b5916"></div>
<div style="position:absolute;left:1016px;top:429px;width:21px;height:16px;background:#6b5916"></div>
<div style="position:absolute;left:1178px;top:429px;width:7px;height:16px;background:#6b5916"></div>
<div style="position:absolute;left:1058px;top:429px;width:21px;height:16px;background:#6b5916"></div>
<div style="position:absolute;left:1192px;top:429px;width:7px;height:16px;background:#6b5916"></div>
<div style="position:absolute;left:757px;top:445px;width:147px;height:16px;background:#6b5916"></div>
<div style="position:absolute;left:1094px;top:445px;width:49px;height:16px;background:#6b5916"></div>
<div style="position:absolute;left:1037px;top:445px;width:42px;height:16px;background:#6b5916"></div>
<div style="position:absolute;left:1185px;top:445px;width:14px;height:16px;background:#6b5916"></div>
<div style="position:absolute;left:736px;top:461px;width:84px;height:16px;background:#6b5916"></div>
<div style="position:absolute;left:1087px;top:461px;width:28px;height:16px;background:#6b5916"></div>
<div style="position:absolute;left:841px;top:461px;width:21px;height:16px;background:#6b5916"></div>
<div style="position:absolute;left:1122px;top:461px;width:7px;height:16px;background:#6b5916"></div>
<div style="position:absolute;left:883px;top:461px;width:21px;height:16px;background:#6b5916"></div>
<div style="position:absolute;left:1136px;top:461px;width:7px;height:16px;background:#6b5916"></div>
<div style="position:absolute;left:932px;top:461px;width:147px;height:16px;background:#6b5916"></div>
<div style="position:absolute;left:1150px;top:461px;width:49px;height:16px;background:#6b5916"></div>
<div style="position:absolute;left:862px;top:477px;width:217px;height:16px;background:#6b5916"></div>
<div style="position:absolute;left:1129px;top:477px;width:70px;height:16px;background:#6b5916"></div>
<div style="position:absolute;left:736px;top:493px;width:42px;height:16px;background:#6b5916"></div>
<div style="position:absolute;left:1087px;top:493px;width:14px;height:16px;background:#6b5916"></div>
<div style="position:absolute;left:911px;top:493px;width:126px;height:16px;background:#6b5916"></div>
<div style="position:absolute;left:1143px;top:493px;width:42px;height:16px;background:#6b5916"></div>
<div style="position:absolute;left:820px;top:509px;width:21px;height:16px;background:#6b5916"></div>
<div style="position:absolute;left:1115px;top:509px;width:7px;height:16px;background:#6b5916"></div>
<div style="position:absolute;left:862px;top:509px;width:21px;height:16px;background:#6b5916"></div>
<div style="position:absolute;left:1129px;top:509px;width:7px;height:16px;background:#6b5916"></div>
<div style="position:absolute;left:911px;top:509px;width:21px;height:16px;background:#6b5916"></div>
<div style="position:absolute;left:1143px;top:509px;width:7px;height:16px;background:#6b5916"></div>
<div style="position:absolute;left:953px;top:509px;width:21px;height:16px;background:#6b5916"></div>
<div style="position:absolute;left:1157px;top:509px;width:7px;height:16px;background:#6b5916"></div>
<div style="position:absolute;left:995px;top:509px;width:21px;height:16px;background:#6b5916"></div>
<div style="position:absolute;left:1171px;top:509px;width:7px;height:16px;background:#6b5916"></div>
<div style="position:absolute;left:1037px;top:509px;width:21px;height:16px;background:#6b5916"></div>
<div style="position:absolute;left:1185px;top:509px;width:7px;height:16px;background:#6b5916"></div>
<div style="position:absolute;left:736px;top:525px;width:21px;height:16px;background:#6b5916"></div>
<div style="position:absolute;left:1087px;top:525px;width:7px;height:16px;background:#6b5916"></div>
<div style="position:absolute;left:778px;top:525px;width:21px;height:16px;background:#6b5916"></div>
<div style="position:absolute;left:1101px;top:525px;width:7px;height:16px;background:#6b5916"></div>
<div style="position:absolute;left:820px;top:525px;width:21px;height:16px;background:#6b5916"></div>
<div style="position:absolute;left:1115px;top:525px;width:7px;height:16px;background:#6b5916"></div>
<div style="position:absolute;left:862px;top:525px;width:21px;height:16px;background:#6b5916"></div>
<div style="position:absolute;left:1129px;top:525px;width:7px;height:16px;background:#6b5916"></div>
<div style="position:absolute;left:911px;top:525px;width:21px;height:16px;background:#6b5916"></div>
<div style="position:absolute;left:1143px;top:525px;width:7px;height:16px;background:#6b5916"></div>
<div style="position:absolute;left:953px;top:525px;width:21px;height:16px;background:#6b5916"></div>
<div style="position:absolute;left:1157px;top:525px;width:7px;height:16px;background:#6b5916"></div>
<div style="position:absolute;left:995px;top:525px;width:21px;height:16px;background:#6b5916"></div>
<div style="position:absolute;left:1171px;top:525px;width:7px;height:16px;background:#6b5916"></div>
<div style="position:absolute;left:1037px;top:525px;width:21px;height:16px;background:#6b5916"></div>
<div style="position:absolute;left:1185px;top:525px;width:7px;height:16px;background:#6b5916"></div>
<div style="position:absolute;left:736px;top:541px;width:21px;height:16px;background:#6b5916"></div>
<div style="position:absolute;left:1087px;top:541px;width:7px;height:16px;background:#6b5916"></div>
<div style="position:absolute;left:778px;top:541px;width:21px;height:16px;background:#6b5916"></div>
<div style="position:absolute;left:1101px;top:541px;width:7px;height:16px;background:#6b5916"></div>
<div style="position:absolute;left:820px;top:541px;width:21px;height:16px;background:#6b5916"></div>
<div style="position:absolute;left:1115px;top:541px;width:7px;height:16px;background:#6b5916"></div>
<div style="position:absolute;left:862px;top:541px;width:21px;height:16px;background:#6b5916"></div>
<div style="position:absolute;left:1129px;top:541px;width:7px;height:16px;background:#6b5916"></div>
<div style="position:absolute;left:911px;top:541px;width:21px;height:16px;background:#6b5916"></div>
<div style="position:absolute;left:1143px;top:541px;width:7px;height:16px;background:#6b5916"></div>
<div style="position:absolute;left:953px;top:541px;width:21px;height:16px;background:#6b5916"></div>
<div style="position:absolute;left:1157px;top:541px;width:7px;height:16px;background:#6b5916"></div>
<div style="position:absolute;left:995px;top:541px;width:21px;height:16px;background:#6b5916"></div>
<div style="position:absolute;left:1171px;top:541px;width:7px;height:16px;background:#6b5916"></div>
<div style="position:absolute;left:1037px;top:541px;width:21px;height:16px;background:#6b5916"></div>
<div style="position:absolute;left:1185px;top:541px;width:7px;height:16px;background:#6b5916"></div>
<div style="position:absolute;left:736px;top:557px;width:21px;height:16px;background:#6b5916"></div>
<div style="position:absolute;left:1087px;top:557px;width:7px;height:16px;background:#6b5916"></div>
<div style="position:absolute;left:778px;top:557px;width:21px;height:16px;background:#6b5916"></div>
<div style="position:absolute;left:1101px;top:557px;width:7px;height:16px;background:#6b5916"></div>
<div style="position:absolute;left:820px;top:557px;width:259px;height:16px;background:#6b5916"></div>
<div style="position:absolute;left:1115px;top:557px;width:84px;height:16px;background:#6b5916"></div>
<div style="position:absolute;left:736px;top:573px;width:343px;height:16px;background:#6b5916"></div>
<div style="position:absolute;left:1087px;top:573px;width:112px;height:16px;background:#6b5916"></div>
<div style="position:absolute;left:736px;top:589px;width:168px;height:16px;background:#6b5916"></div>
<div style="position:absolute;left:1087px;top:589px;width:56px;height:16px;background:#6b5916"></div>
<div style="position:absolute;left:736px;top:685px;width:259px;height:16px;background:#6b5916"></div>
<div style="position:absolute;left:1087px;top:685px;width:84px;height:16px;background:#6b5916"></div>
<div style="position:absolute;left:1016px;top:685px;width:21px;height:16px;background:#6b5916"></div>
<div style="position:absolute;left:1178px;top:685px;width:7px;height:16px;background:#6b5916"></div>
<div class="m" style="left:663px;top:175px;color:#f2f2f2;">00000000:</div>
<div class="m" style="left:739px;top:175px;color:#f2f2f2;"><span style="color:#f2f2f2">E9</span> <span style="color:#f2f2f2">8C</span> <span style="color:#f2f2f2">15</span> <span style="color:#f2f2f2">26</span> <span style="color:#f2f2f2">E9</span> <span style="color:#f2f2f2">8C</span> <span style="color:#f2f2f2">15</span> <span style="color:#f2f2f2">26</span>  <span style="color:#f2f2f2">E9</span> <span style="color:#f2f2f2">8C</span> <span style="color:#f2f2f2">15</span> <span style="color:#f2f2f2">26</span> <span style="color:#8e8e8e">00</span> <span style="color:#8e8e8e">00</span> <span style="color:#8e8e8e">00</span> <span style="color:#8e8e8e">00</span></div>
<div class="m" style="left:1087px;top:175px;color:#f2f2f2;"><span style="color:#8e8e8e">...</span><span style="color:#f2f2f2">&amp;</span><span style="color:#8e8e8e">...</span><span style="color:#f2f2f2">&amp;</span><span style="color:#8e8e8e">...</span><span style="color:#f2f2f2">&amp;</span><span style="color:#8e8e8e">....</span></div>
<div class="m" style="left:663px;top:191px;color:#f2f2f2;">00000010:</div>
<div class="m" style="left:739px;top:191px;color:#f2f2f2;"><span style="color:#f2f2f2">4A</span> <span style="color:#f2f2f2">54</span> <span style="color:#f2f2f2">4A</span> <span style="color:#f2f2f2">42</span> <span style="color:#f2f2f2">41</span> <span style="color:#f2f2f2">52</span> <span style="color:#f2f2f2">42</span> <span style="color:#f2f2f2">5A</span>  <span style="color:#f2f2f2">39</span> <span style="color:#f2f2f2">30</span> <span style="color:#f2f2f2">32</span> <span style="color:#f2f2f2">30</span> <span style="color:#f2f2f2">35</span> <span style="color:#f2f2f2">34</span> <span style="color:#f2f2f2">39</span> <span style="color:#f2f2f2">30</span></div>
<div class="m" style="left:1087px;top:191px;color:#f2f2f2;"><span style="color:#f2f2f2">JTJBARBZ90205490</span></div>
<div class="m" style="left:663px;top:207px;color:#f2f2f2;">00000020:</div>
<div class="m" style="left:739px;top:207px;color:#f2f2f2;"><span style="color:#f2f2f2">34</span> <span style="color:#f2f2f2">4A</span> <span style="color:#f2f2f2">54</span> <span style="color:#f2f2f2">4A</span> <span style="color:#f2f2f2">42</span> <span style="color:#f2f2f2">41</span> <span style="color:#f2f2f2">52</span> <span style="color:#f2f2f2">42</span>  <span style="color:#f2f2f2">5A</span> <span style="color:#f2f2f2">39</span> <span style="color:#f2f2f2">30</span> <span style="color:#f2f2f2">32</span> <span style="color:#f2f2f2">30</span> <span style="color:#f2f2f2">35</span> <span style="color:#f2f2f2">34</span> <span style="color:#f2f2f2">39</span></div>
<div class="m" style="left:1087px;top:207px;color:#f2f2f2;"><span style="color:#f2f2f2">4JTJBARBZ9020549</span></div>
<div class="m" style="left:663px;top:223px;color:#f2f2f2;">00000030:</div>
<div class="m" style="left:739px;top:223px;color:#f2f2f2;"><span style="color:#f2f2f2">30</span> <span style="color:#f2f2f2">34</span> <span style="color:#f2f2f2">4A</span> <span style="color:#f2f2f2">54</span> <span style="color:#f2f2f2">4A</span> <span style="color:#f2f2f2">42</span> <span style="color:#f2f2f2">41</span> <span style="color:#f2f2f2">52</span>  <span style="color:#f2f2f2">42</span> <span style="color:#f2f2f2">5A</span> <span style="color:#f2f2f2">39</span> <span style="color:#f2f2f2">30</span> <span style="color:#f2f2f2">32</span> <span style="color:#f2f2f2">30</span> <span style="color:#f2f2f2">35</span> <span style="color:#f2f2f2">34</span></div>
<div class="m" style="left:1087px;top:223px;color:#f2f2f2;"><span style="color:#f2f2f2">04JTJBARBZ902054</span></div>
<div class="m" style="left:663px;top:239px;color:#f2f2f2;">00000040:</div>
<div class="m" style="left:739px;top:239px;color:#f2f2f2;"><span style="color:#f2f2f2">39</span> <span style="color:#f2f2f2">30</span> <span style="color:#f2f2f2">34</span> <span style="color:#8e8e8e">00</span> <span style="color:#8e8e8e">00</span> <span style="color:#8e8e8e">00</span> <span style="color:#8e8e8e">00</span> <span style="color:#8e8e8e">00</span>  <span style="color:#8e8e8e">00</span> <span style="color:#8e8e8e">00</span> <span style="color:#8e8e8e">00</span> <span style="color:#8e8e8e">00</span> <span style="color:#8e8e8e">00</span> <span style="color:#8e8e8e">00</span> <span style="color:#8e8e8e">00</span> <span style="color:#8e8e8e">00</span></div>
<div class="m" style="left:1087px;top:239px;color:#f2f2f2;"><span style="color:#f2f2f2">904</span><span style="color:#8e8e8e">.............</span></div>
<div class="m" style="left:663px;top:255px;color:#f2f2f2;">00000050:</div>
<div class="m" style="left:739px;top:255px;color:#f2f2f2;"><span style="color:#8e8e8e">00</span> <span style="color:#8e8e8e">00</span> <span style="color:#8e8e8e">00</span> <span style="color:#8e8e8e">00</span> <span style="color:#8e8e8e">00</span> <span style="color:#8e8e8e">00</span> <span style="color:#8e8e8e">00</span> <span style="color:#8e8e8e">00</span>  <span style="color:#8e8e8e">00</span> <span style="color:#8e8e8e">00</span> <span style="color:#8e8e8e">00</span> <span style="color:#8e8e8e">00</span> <span style="color:#8e8e8e">00</span> <span style="color:#8e8e8e">00</span> <span style="color:#8e8e8e">00</span> <span style="color:#8e8e8e">00</span></div>
<div class="m" style="left:1087px;top:255px;color:#f2f2f2;"><span style="color:#8e8e8e">................</span></div>
<div class="m" style="left:663px;top:271px;color:#f2f2f2;">00000060:</div>
<div class="m" style="left:739px;top:271px;color:#f2f2f2;"><span style="color:#8e8e8e">00</span> <span style="color:#8e8e8e">00</span> <span style="color:#8e8e8e">00</span> <span style="color:#8e8e8e">00</span> <span style="color:#8e8e8e">00</span> <span style="color:#8e8e8e">00</span> <span style="color:#8e8e8e">00</span> <span style="color:#8e8e8e">00</span>  <span style="color:#8e8e8e">00</span> <span style="color:#8e8e8e">00</span> <span style="color:#8e8e8e">00</span> <span style="color:#8e8e8e">00</span> <span style="color:#8e8e8e">00</span> <span style="color:#8e8e8e">00</span> <span style="color:#8e8e8e">00</span> <span style="color:#8e8e8e">00</span></div>
<div class="m" style="left:1087px;top:271px;color:#f2f2f2;"><span style="color:#8e8e8e">................</span></div>
<div class="m" style="left:663px;top:287px;color:#f2f2f2;">00000070:</div>
<div class="m" style="left:739px;top:287px;color:#f2f2f2;"><span style="color:#8e8e8e">00</span> <span style="color:#8e8e8e">00</span> <span style="color:#8e8e8e">00</span> <span style="color:#8e8e8e">00</span> <span style="color:#8e8e8e">00</span> <span style="color:#8e8e8e">00</span> <span style="color:#8e8e8e">00</span> <span style="color:#8e8e8e">00</span>  <span style="color:#8e8e8e">00</span> <span style="color:#8e8e8e">00</span> <span style="color:#8e8e8e">00</span> <span style="color:#8e8e8e">00</span> <span style="color:#8e8e8e">00</span> <span style="color:#8e8e8e">00</span> <span style="color:#8e8e8e">00</span> <span style="color:#8e8e8e">00</span></div>
<div class="m" style="left:1087px;top:287px;color:#f2f2f2;"><span style="color:#8e8e8e">................</span></div>
<div class="m" style="left:663px;top:303px;color:#f2f2f2;">00000080:</div>
<div class="m" style="left:739px;top:303px;color:#f2f2f2;"><span style="color:#8e8e8e">00</span> <span style="color:#8e8e8e">00</span> <span style="color:#8e8e8e">00</span> <span style="color:#8e8e8e">00</span> <span style="color:#8e8e8e">00</span> <span style="color:#8e8e8e">00</span> <span style="color:#8e8e8e">00</span> <span style="color:#8e8e8e">00</span>  <span style="color:#8e8e8e">00</span> <span style="color:#8e8e8e">00</span> <span style="color:#8e8e8e">00</span> <span style="color:#8e8e8e">00</span> <span style="color:#8e8e8e">00</span> <span style="color:#8e8e8e">00</span> <span style="color:#8e8e8e">00</span> <span style="color:#8e8e8e">00</span></div>
<div class="m" style="left:1087px;top:303px;color:#f2f2f2;"><span style="color:#8e8e8e">................</span></div>
<div class="m" style="left:663px;top:319px;color:#f2f2f2;">00000090:</div>
<div class="m" style="left:739px;top:319px;color:#f2f2f2;"><span style="color:#8e8e8e">00</span> <span style="color:#8e8e8e">00</span> <span style="color:#8e8e8e">00</span> <span style="color:#8e8e8e">00</span> <span style="color:#8e8e8e">00</span> <span style="color:#8e8e8e">00</span> <span style="color:#8e8e8e">00</span> <span style="color:#8e8e8e">00</span>  <span style="color:#8e8e8e">00</span> <span style="color:#8e8e8e">00</span> <span style="color:#8e8e8e">00</span> <span style="color:#8e8e8e">00</span> <span style="color:#8e8e8e">00</span> <span style="color:#8e8e8e">00</span> <span style="color:#8e8e8e">00</span> <span style="color:#8e8e8e">00</span></div>
<div class="m" style="left:1087px;top:319px;color:#f2f2f2;"><span style="color:#8e8e8e">................</span></div>
<div class="m" style="left:663px;top:335px;color:#f2f2f2;">000000A0:</div>
<div class="m" style="left:739px;top:335px;color:#f2f2f2;"><span style="color:#8e8e8e">00</span> <span style="color:#f2f2f2">FF</span> <span style="color:#8e8e8e">00</span> <span style="color:#8e8e8e">00</span> <span style="color:#8e8e8e">00</span> <span style="color:#8e8e8e">00</span> <span style="color:#8e8e8e">00</span> <span style="color:#8e8e8e">00</span>  <span style="color:#8e8e8e">00</span> <span style="color:#8e8e8e">00</span> <span style="color:#8e8e8e">00</span> <span style="color:#8e8e8e">00</span> <span style="color:#8e8e8e">00</span> <span style="color:#8e8e8e">00</span> <span style="color:#8e8e8e">00</span> <span style="color:#8e8e8e">00</span></div>
<div class="m" style="left:1087px;top:335px;color:#f2f2f2;"><span style="color:#8e8e8e">................</span></div>
<div class="m" style="left:663px;top:351px;color:#f2f2f2;">000000B0:</div>
<div class="m" style="left:739px;top:351px;color:#f2f2f2;"><span style="color:#8e8e8e">00</span> <span style="color:#8e8e8e">00</span> <span style="color:#8e8e8e">00</span> <span style="color:#8e8e8e">00</span> <span style="color:#8e8e8e">00</span> <span style="color:#8e8e8e">00</span> <span style="color:#8e8e8e">00</span> <span style="color:#8e8e8e">00</span>  <span style="color:#8e8e8e">00</span> <span style="color:#8e8e8e">00</span> <span style="color:#8e8e8e">00</span> <span style="color:#8e8e8e">00</span> <span style="color:#8e8e8e">00</span> <span style="color:#8e8e8e">00</span> <span style="color:#8e8e8e">00</span> <span style="color:#8e8e8e">00</span></div>
<div class="m" style="left:1087px;top:351px;color:#f2f2f2;"><span style="color:#8e8e8e">................</span></div>
<div class="m" style="left:663px;top:367px;color:#f2f2f2;">000000C0:</div>
<div class="m" style="left:739px;top:367px;color:#f2f2f2;"><span style="color:#8e8e8e">00</span> <span style="color:#8e8e8e">00</span> <span style="color:#8e8e8e">00</span> <span style="color:#8e8e8e">00</span> <span style="color:#8e8e8e">00</span> <span style="color:#8e8e8e">00</span> <span style="color:#8e8e8e">00</span> <span style="color:#8e8e8e">00</span>  <span style="color:#8e8e8e">00</span> <span style="color:#8e8e8e">00</span> <span style="color:#8e8e8e">00</span> <span style="color:#8e8e8e">00</span> <span style="color:#8e8e8e">00</span> <span style="color:#8e8e8e">00</span> <span style="color:#8e8e8e">00</span> <span style="color:#8e8e8e">00</span></div>
<div class="m" style="left:1087px;top:367px;color:#f2f2f2;"><span style="color:#8e8e8e">................</span></div>
<div class="m" style="left:663px;top:383px;color:#f2f2f2;">000000D0:</div>
<div class="m" style="left:739px;top:383px;color:#f2f2f2;"><span style="color:#8e8e8e">00</span> <span style="color:#8e8e8e">00</span> <span style="color:#8e8e8e">00</span> <span style="color:#8e8e8e">00</span> <span style="color:#8e8e8e">00</span> <span style="color:#8e8e8e">00</span> <span style="color:#8e8e8e">00</span> <span style="color:#8e8e8e">00</span>  <span style="color:#8e8e8e">00</span> <span style="color:#8e8e8e">00</span> <span style="color:#8e8e8e">00</span> <span style="color:#8e8e8e">00</span> <span style="color:#8e8e8e">00</span> <span style="color:#8e8e8e">00</span> <span style="color:#8e8e8e">00</span> <span style="color:#8e8e8e">00</span></div>
<div class="m" style="left:1087px;top:383px;color:#f2f2f2;"><span style="color:#8e8e8e">................</span></div>
<div class="m" style="left:663px;top:399px;color:#f2f2f2;">000000E0:</div>
<div class="m" style="left:739px;top:399px;color:#f2f2f2;"><span style="color:#f2f2f2">05</span> <span style="color:#8e8e8e">00</span> <span style="color:#f2f2f2">05</span> <span style="color:#8e8e8e">00</span> <span style="color:#8e8e8e">00</span> <span style="color:#8e8e8e">00</span> <span style="color:#8e8e8e">00</span> <span style="color:#8e8e8e">00</span>  <span style="color:#8e8e8e">00</span> <span style="color:#8e8e8e">00</span> <span style="color:#8e8e8e">00</span> <span style="color:#8e8e8e">00</span> <span style="color:#8e8e8e">00</span> <span style="color:#8e8e8e">00</span> <span style="color:#8e8e8e">00</span> <span style="color:#8e8e8e">00</span></div>
<div class="m" style="left:1087px;top:399px;color:#f2f2f2;"><span style="color:#8e8e8e">................</span></div>
<div class="m" style="left:663px;top:415px;color:#f2f2f2;">000000F0:</div>
<div class="m" style="left:739px;top:415px;color:#f2f2f2;"><span style="color:#8e8e8e">00</span> <span style="color:#8e8e8e">00</span> <span style="color:#8e8e8e">00</span> <span style="color:#8e8e8e">00</span> <span style="color:#8e8e8e">00</span> <span style="color:#8e8e8e">00</span> <span style="color:#8e8e8e">00</span> <span style="color:#8e8e8e">00</span>  <span style="color:#8e8e8e">00</span> <span style="color:#8e8e8e">00</span> <span style="color:#8e8e8e">00</span> <span style="color:#8e8e8e">00</span> <span style="color:#8e8e8e">00</span> <span style="color:#8e8e8e">00</span> <span style="color:#8e8e8e">00</span> <span style="color:#8e8e8e">00</span></div>
<div class="m" style="left:1087px;top:415px;color:#f2f2f2;"><span style="color:#8e8e8e">................</span></div>
<div class="m" style="left:663px;top:431px;color:#f2f2f2;">00000100:</div>
<div class="m" style="left:739px;top:431px;color:#f2f2f2;"><span style="color:#8e8e8e">00</span> <span style="color:#8e8e8e">00</span> <span style="color:#8e8e8e">00</span> <span style="color:#8e8e8e">00</span> <span style="color:#8e8e8e">00</span> <span style="color:#8e8e8e">00</span> <span style="color:#8e8e8e">00</span> <span style="color:#8e8e8e">00</span>  <span style="color:#8e8e8e">00</span> <span style="color:#8e8e8e">00</span> <span style="color:#8e8e8e">00</span> <span style="color:#8e8e8e">00</span> <span style="color:#8e8e8e">00</span> <span style="color:#8e8e8e">00</span> <span style="color:#8e8e8e">00</span> <span style="color:#8e8e8e">00</span></div>
<div class="m" style="left:1087px;top:431px;color:#f2f2f2;"><span style="color:#8e8e8e">................</span></div>
<div class="m" style="left:663px;top:447px;color:#f2f2f2;">00000110:</div>
<div class="m" style="left:739px;top:447px;color:#f2f2f2;"><span style="color:#8e8e8e">00</span> <span style="color:#8e8e8e">00</span> <span style="color:#8e8e8e">00</span> <span style="color:#8e8e8e">00</span> <span style="color:#8e8e8e">00</span> <span style="color:#8e8e8e">00</span> <span style="color:#8e8e8e">00</span> <span style="color:#8e8e8e">00</span>  <span style="color:#8e8e8e">00</span> <span style="color:#8e8e8e">00</span> <span style="color:#8e8e8e">00</span> <span style="color:#8e8e8e">00</span> <span style="color:#8e8e8e">00</span> <span style="color:#8e8e8e">00</span> <span style="color:#8e8e8e">00</span> <span style="color:#8e8e8e">00</span></div>
<div class="m" style="left:1087px;top:447px;color:#f2f2f2;"><span style="color:#8e8e8e">................</span></div>
<div class="m" style="left:663px;top:463px;color:#f2f2f2;">00000120:</div>
<div class="m" style="left:739px;top:463px;color:#f2f2f2;"><span style="color:#8e8e8e">00</span> <span style="color:#8e8e8e">00</span> <span style="color:#8e8e8e">00</span> <span style="color:#8e8e8e">00</span> <span style="color:#8e8e8e">00</span> <span style="color:#8e8e8e">00</span> <span style="color:#8e8e8e">00</span> <span style="color:#8e8e8e">00</span>  <span style="color:#8e8e8e">00</span> <span style="color:#8e8e8e">00</span> <span style="color:#8e8e8e">00</span> <span style="color:#8e8e8e">00</span> <span style="color:#8e8e8e">00</span> <span style="color:#8e8e8e">00</span> <span style="color:#8e8e8e">00</span> <span style="color:#8e8e8e">00</span></div>
<div class="m" style="left:1087px;top:463px;color:#f2f2f2;"><span style="color:#8e8e8e">................</span></div>
<div class="m" style="left:663px;top:479px;color:#f2f2f2;">00000130:</div>
<div class="m" style="left:739px;top:479px;color:#f2f2f2;"><span style="color:#8e8e8e">00</span> <span style="color:#8e8e8e">00</span> <span style="color:#8e8e8e">00</span> <span style="color:#8e8e8e">00</span> <span style="color:#8e8e8e">00</span> <span style="color:#8e8e8e">00</span> <span style="color:#8e8e8e">00</span> <span style="color:#8e8e8e">00</span>  <span style="color:#8e8e8e">00</span> <span style="color:#8e8e8e">00</span> <span style="color:#8e8e8e">00</span> <span style="color:#8e8e8e">00</span> <span style="color:#8e8e8e">00</span> <span style="color:#8e8e8e">00</span> <span style="color:#8e8e8e">00</span> <span style="color:#8e8e8e">00</span></div>
<div class="m" style="left:1087px;top:479px;color:#f2f2f2;"><span style="color:#8e8e8e">................</span></div>
<div class="m" style="left:663px;top:495px;color:#f2f2f2;">00000140:</div>
<div class="m" style="left:739px;top:495px;color:#f2f2f2;"><span style="color:#8e8e8e">00</span> <span style="color:#8e8e8e">00</span> <span style="color:#8e8e8e">00</span> <span style="color:#8e8e8e">00</span> <span style="color:#8e8e8e">00</span> <span style="color:#8e8e8e">00</span> <span style="color:#8e8e8e">00</span> <span style="color:#8e8e8e">00</span>  <span style="color:#8e8e8e">00</span> <span style="color:#8e8e8e">00</span> <span style="color:#8e8e8e">00</span> <span style="color:#8e8e8e">00</span> <span style="color:#8e8e8e">00</span> <span style="color:#8e8e8e">00</span> <span style="color:#8e8e8e">00</span> <span style="color:#8e8e8e">00</span></div>
<div class="m" style="left:1087px;top:495px;color:#f2f2f2;"><span style="color:#8e8e8e">................</span></div>
<div class="m" style="left:663px;top:511px;color:#f2f2f2;">00000150:</div>
<div class="m" style="left:739px;top:511px;color:#f2f2f2;"><span style="color:#8e8e8e">00</span> <span style="color:#8e8e8e">00</span> <span style="color:#8e8e8e">00</span> <span style="color:#8e8e8e">00</span> <span style="color:#8e8e8e">00</span> <span style="color:#8e8e8e">00</span> <span style="color:#8e8e8e">00</span> <span style="color:#8e8e8e">00</span>  <span style="color:#8e8e8e">00</span> <span style="color:#8e8e8e">00</span> <span style="color:#8e8e8e">00</span> <span style="color:#8e8e8e">00</span> <span style="color:#8e8e8e">00</span> <span style="color:#8e8e8e">00</span> <span style="color:#8e8e8e">00</span> <span style="color:#8e8e8e">00</span></div>
<div class="m" style="left:1087px;top:511px;color:#f2f2f2;"><span style="color:#8e8e8e">................</span></div>
<div class="m" style="left:663px;top:527px;color:#f2f2f2;">00000160:</div>
<div class="m" style="left:739px;top:527px;color:#f2f2f2;"><span style="color:#8e8e8e">00</span> <span style="color:#8e8e8e">00</span> <span style="color:#8e8e8e">00</span> <span style="color:#8e8e8e">00</span> <span style="color:#8e8e8e">00</span> <span style="color:#8e8e8e">00</span> <span style="color:#8e8e8e">00</span> <span style="color:#8e8e8e">00</span>  <span style="color:#8e8e8e">00</span> <span style="color:#8e8e8e">00</span> <span style="color:#8e8e8e">00</span> <span style="color:#8e8e8e">00</span> <span style="color:#8e8e8e">00</span> <span style="color:#8e8e8e">00</span> <span style="color:#8e8e8e">00</span> <span style="color:#8e8e8e">00</span></div>
<div class="m" style="left:1087px;top:527px;color:#f2f2f2;"><span style="color:#8e8e8e">................</span></div>
<div class="m" style="left:663px;top:543px;color:#f2f2f2;">00000170:</div>
<div class="m" style="left:739px;top:543px;color:#f2f2f2;"><span style="color:#8e8e8e">00</span> <span style="color:#8e8e8e">00</span> <span style="color:#8e8e8e">00</span> <span style="color:#8e8e8e">00</span> <span style="color:#8e8e8e">00</span> <span style="color:#8e8e8e">00</span> <span style="color:#8e8e8e">00</span> <span style="color:#8e8e8e">00</span>  <span style="color:#8e8e8e">00</span> <span style="color:#8e8e8e">00</span> <span style="color:#8e8e8e">00</span> <span style="color:#8e8e8e">00</span> <span style="color:#8e8e8e">00</span> <span style="color:#8e8e8e">00</span> <span style="color:#8e8e8e">00</span> <span style="color:#8e8e8e">00</span></div>
<div class="m" style="left:1087px;top:543px;color:#f2f2f2;"><span style="color:#8e8e8e">................</span></div>
<div class="m" style="left:663px;top:559px;color:#f2f2f2;">00000180:</div>
<div class="m" style="left:739px;top:559px;color:#f2f2f2;"><span style="color:#8e8e8e">00</span> <span style="color:#8e8e8e">00</span> <span style="color:#8e8e8e">00</span> <span style="color:#8e8e8e">00</span> <span style="color:#8e8e8e">00</span> <span style="color:#8e8e8e">00</span> <span style="color:#8e8e8e">00</span> <span style="color:#8e8e8e">00</span>  <span style="color:#8e8e8e">00</span> <span style="color:#8e8e8e">00</span> <span style="color:#8e8e8e">00</span> <span style="color:#8e8e8e">00</span> <span style="color:#8e8e8e">00</span> <span style="color:#8e8e8e">00</span> <span style="color:#8e8e8e">00</span> <span style="color:#8e8e8e">00</span></div>
<div class="m" style="left:1087px;top:559px;color:#f2f2f2;"><span style="color:#8e8e8e">................</span></div>
<div class="m" style="left:663px;top:575px;color:#f2f2f2;">00000190:</div>
<div class="m" style="left:739px;top:575px;color:#f2f2f2;"><span style="color:#8e8e8e">00</span> <span style="color:#8e8e8e">00</span> <span style="color:#8e8e8e">00</span> <span style="color:#8e8e8e">00</span> <span style="color:#8e8e8e">00</span> <span style="color:#8e8e8e">00</span> <span style="color:#8e8e8e">00</span> <span style="color:#8e8e8e">00</span>  <span style="color:#8e8e8e">00</span> <span style="color:#8e8e8e">00</span> <span style="color:#8e8e8e">00</span> <span style="color:#8e8e8e">00</span> <span style="color:#8e8e8e">00</span> <span style="color:#8e8e8e">00</span> <span style="color:#8e8e8e">00</span> <span style="color:#8e8e8e">00</span></div>
<div class="m" style="left:1087px;top:575px;color:#f2f2f2;"><span style="color:#8e8e8e">................</span></div>
<div class="m" style="left:663px;top:591px;color:#f2f2f2;">000001A0:</div>
<div class="m" style="left:739px;top:591px;color:#f2f2f2;"><span style="color:#8e8e8e">00</span> <span style="color:#8e8e8e">00</span> <span style="color:#8e8e8e">00</span> <span style="color:#8e8e8e">00</span> <span style="color:#8e8e8e">00</span> <span style="color:#8e8e8e">00</span> <span style="color:#8e8e8e">00</span> <span style="color:#8e8e8e">00</span>  <span style="color:#8e8e8e">00</span> <span style="color:#8e8e8e">00</span> <span style="color:#8e8e8e">00</span> <span style="color:#8e8e8e">00</span> <span style="color:#8e8e8e">00</span> <span style="color:#8e8e8e">00</span> <span style="color:#8e8e8e">00</span> <span style="color:#8e8e8e">00</span></div>
<div class="m" style="left:1087px;top:591px;color:#f2f2f2;"><span style="color:#8e8e8e">................</span></div>
<div class="m" style="left:663px;top:607px;color:#f2f2f2;">000001B0:</div>
<div class="m" style="left:739px;top:607px;color:#f2f2f2;"><span style="color:#8e8e8e">00</span> <span style="color:#8e8e8e">00</span> <span style="color:#8e8e8e">00</span> <span style="color:#8e8e8e">00</span> <span style="color:#8e8e8e">00</span> <span style="color:#8e8e8e">00</span> <span style="color:#8e8e8e">00</span> <span style="color:#8e8e8e">00</span>  <span style="color:#8e8e8e">00</span> <span style="color:#8e8e8e">00</span> <span style="color:#8e8e8e">00</span> <span style="color:#8e8e8e">00</span> <span style="color:#8e8e8e">00</span> <span style="color:#8e8e8e">00</span> <span style="color:#8e8e8e">00</span> <span style="color:#8e8e8e">00</span></div>
<div class="m" style="left:1087px;top:607px;color:#f2f2f2;"><span style="color:#8e8e8e">................</span></div>
<div class="m" style="left:663px;top:623px;color:#f2f2f2;">000001C0:</div>
<div class="m" style="left:739px;top:623px;color:#f2f2f2;"><span style="color:#8e8e8e">00</span> <span style="color:#8e8e8e">00</span> <span style="color:#8e8e8e">00</span> <span style="color:#8e8e8e">00</span> <span style="color:#8e8e8e">00</span> <span style="color:#8e8e8e">00</span> <span style="color:#8e8e8e">00</span> <span style="color:#8e8e8e">00</span>  <span style="color:#8e8e8e">00</span> <span style="color:#8e8e8e">00</span> <span style="color:#8e8e8e">00</span> <span style="color:#8e8e8e">00</span> <span style="color:#8e8e8e">00</span> <span style="color:#8e8e8e">00</span> <span style="color:#8e8e8e">00</span> <span style="color:#8e8e8e">00</span></div>
<div class="m" style="left:1087px;top:623px;color:#f2f2f2;"><span style="color:#8e8e8e">................</span></div>
<div class="m" style="left:663px;top:639px;color:#f2f2f2;">000001D0:</div>
<div class="m" style="left:739px;top:639px;color:#f2f2f2;"><span style="color:#8e8e8e">00</span> <span style="color:#8e8e8e">00</span> <span style="color:#8e8e8e">00</span> <span style="color:#8e8e8e">00</span> <span style="color:#8e8e8e">00</span> <span style="color:#8e8e8e">00</span> <span style="color:#8e8e8e">00</span> <span style="color:#8e8e8e">00</span>  <span style="color:#8e8e8e">00</span> <span style="color:#8e8e8e">00</span> <span style="color:#8e8e8e">00</span> <span style="color:#8e8e8e">00</span> <span style="color:#8e8e8e">00</span> <span style="color:#8e8e8e">00</span> <span style="color:#8e8e8e">00</span> <span style="color:#8e8e8e">00</span></div>
<div class="m" style="left:1087px;top:639px;color:#f2f2f2;"><span style="color:#8e8e8e">................</span></div>
<div class="m" style="left:663px;top:655px;color:#f2f2f2;">000001E0:</div>
<div class="m" style="left:739px;top:655px;color:#f2f2f2;"><span style="color:#8e8e8e">00</span> <span style="color:#8e8e8e">00</span> <span style="color:#8e8e8e">00</span> <span style="color:#8e8e8e">00</span> <span style="color:#8e8e8e">00</span> <span style="color:#8e8e8e">00</span> <span style="color:#8e8e8e">00</span> <span style="color:#8e8e8e">00</span>  <span style="color:#8e8e8e">00</span> <span style="color:#8e8e8e">00</span> <span style="color:#8e8e8e">00</span> <span style="color:#8e8e8e">00</span> <span style="color:#8e8e8e">00</span> <span style="color:#8e8e8e">00</span> <span style="color:#8e8e8e">00</span> <span style="color:#8e8e8e">00</span></div>
<div class="m" style="left:1087px;top:655px;color:#f2f2f2;"><span style="color:#8e8e8e">................</span></div>
<div class="m" style="left:663px;top:671px;color:#f2f2f2;">000001F0:</div>
<div class="m" style="left:739px;top:671px;color:#f2f2f2;"><span style="color:#8e8e8e">00</span> <span style="color:#8e8e8e">00</span> <span style="color:#8e8e8e">00</span> <span style="color:#8e8e8e">00</span> <span style="color:#8e8e8e">00</span> <span style="color:#8e8e8e">00</span> <span style="color:#8e8e8e">00</span> <span style="color:#8e8e8e">00</span>  <span style="color:#8e8e8e">00</span> <span style="color:#8e8e8e">00</span> <span style="color:#8e8e8e">00</span> <span style="color:#8e8e8e">00</span> <span style="color:#8e8e8e">00</span> <span style="color:#8e8e8e">00</span> <span style="color:#8e8e8e">00</span> <span style="color:#8e8e8e">00</span></div>
<div class="m" style="left:1087px;top:671px;color:#f2f2f2;"><span style="color:#8e8e8e">................</span></div>
<div class="m" style="left:663px;top:687px;color:#f2f2f2;">00000200:</div>
<div class="m" style="left:739px;top:687px;color:#f2f2f2;"><span style="color:#f2f2f2">08</span> <span style="color:#f2f2f2">08</span> <span style="color:#f2f2f2">08</span> <span style="color:#f2f2f2">08</span> <span style="color:#f2f2f2">08</span> <span style="color:#f2f2f2">08</span> <span style="color:#f2f2f2">09</span> <span style="color:#f2f2f2">09</span>  <span style="color:#f2f2f2">09</span> <span style="color:#f2f2f2">09</span> <span style="color:#f2f2f2">09</span> <span style="color:#f2f2f2">09</span> <span style="color:#f2f2f2">A5</span> <span style="color:#f2f2f2">02</span> <span style="color:#8e8e8e">00</span> <span style="color:#8e8e8e">00</span></div>
<div class="m" style="left:1087px;top:687px;color:#f2f2f2;"><span style="color:#8e8e8e">................</span></div>
<div class="m" style="left:663px;top:703px;color:#f2f2f2;height:9px;overflow:hidden;">00000210:</div>
<div class="m" style="left:739px;top:703px;color:#f2f2f2;height:9px;overflow:hidden;"><span style="color:#8e8e8e">00</span> <span style="color:#8e8e8e">00</span> <span style="color:#f2f2f2">01</span> <span style="color:#f2f2f2">01</span> <span style="color:#8e8e8e">00</span> <span style="color:#8e8e8e">00</span> <span style="color:#8e8e8e">00</span> <span style="color:#f2f2f2">01</span>  <span style="color:#8e8e8e">00</span> <span style="color:#f2f2f2">01</span> <span style="color:#f2f2f2">FF</span> <span style="color:#8e8e8e">00</span> <span style="color:#8e8e8e">00</span> <span style="color:#8e8e8e">00</span> <span style="color:#8e8e8e">00</span> <span style="color:#8e8e8e">00</span></div>
<div class="m" style="left:1087px;top:703px;color:#f2f2f2;height:9px;overflow:hidden;"><span style="color:#8e8e8e">................</span></div>
<div class="m" style="left:1291px;top:147px;color:#f0f0f0;">Address</div>
<div class="m" style="left:1367px;top:147px;color:#f0f0f0;">00 01 02 03 04 05 06 07  08 09 0A 0B 0C 0D 0E 0F</div>
<div class="m" style="left:1715px;top:147px;color:#f0f0f0;">ASCII</div>
<div style="position:absolute;left:1364px;top:173px;width:322px;height:16px;background:#6b5916"></div>
<div style="position:absolute;left:1715px;top:173px;width:105px;height:16px;background:#6b5916"></div>
<div style="position:absolute;left:1511px;top:269px;width:21px;height:16px;background:#6b5916"></div>
<div style="position:absolute;left:1764px;top:269px;width:7px;height:16px;background:#6b5916"></div>
<div style="position:absolute;left:1364px;top:365px;width:42px;height:16px;background:#6b5916"></div>
<div style="position:absolute;left:1715px;top:365px;width:14px;height:16px;background:#6b5916"></div>
<div style="position:absolute;left:1427px;top:365px;width:21px;height:16px;background:#6b5916"></div>
<div style="position:absolute;left:1736px;top:365px;width:7px;height:16px;background:#6b5916"></div>
<div style="position:absolute;left:1364px;top:397px;width:21px;height:16px;background:#6b5916"></div>
<div style="position:absolute;left:1715px;top:397px;width:7px;height:16px;background:#6b5916"></div>
<div style="position:absolute;left:1406px;top:397px;width:21px;height:16px;background:#6b5916"></div>
<div style="position:absolute;left:1729px;top:397px;width:7px;height:16px;background:#6b5916"></div>
<div style="position:absolute;left:1364px;top:429px;width:259px;height:16px;background:#6b5916"></div>
<div style="position:absolute;left:1715px;top:429px;width:84px;height:16px;background:#6b5916"></div>
<div style="position:absolute;left:1644px;top:429px;width:21px;height:16px;background:#6b5916"></div>
<div style="position:absolute;left:1806px;top:429px;width:7px;height:16px;background:#6b5916"></div>
<div style="position:absolute;left:1686px;top:429px;width:21px;height:16px;background:#6b5916"></div>
<div style="position:absolute;left:1820px;top:429px;width:7px;height:16px;background:#6b5916"></div>
<div style="position:absolute;left:1385px;top:445px;width:147px;height:16px;background:#6b5916"></div>
<div style="position:absolute;left:1722px;top:445px;width:49px;height:16px;background:#6b5916"></div>
<div style="position:absolute;left:1665px;top:445px;width:42px;height:16px;background:#6b5916"></div>
<div style="position:absolute;left:1813px;top:445px;width:14px;height:16px;background:#6b5916"></div>
<div style="position:absolute;left:1364px;top:461px;width:84px;height:16px;background:#6b5916"></div>
<div style="position:absolute;left:1715px;top:461px;width:28px;height:16px;background:#6b5916"></div>
<div style="position:absolute;left:1469px;top:461px;width:21px;height:16px;background:#6b5916"></div>
<div style="position:absolute;left:1750px;top:461px;width:7px;height:16px;background:#6b5916"></div>
<div style="position:absolute;left:1511px;top:461px;width:21px;height:16px;background:#6b5916"></div>
<div style="position:absolute;left:1764px;top:461px;width:7px;height:16px;background:#6b5916"></div>
<div style="position:absolute;left:1560px;top:461px;width:147px;height:16px;background:#6b5916"></div>
<div style="position:absolute;left:1778px;top:461px;width:49px;height:16px;background:#6b5916"></div>
<div style="position:absolute;left:1490px;top:477px;width:217px;height:16px;background:#6b5916"></div>
<div style="position:absolute;left:1757px;top:477px;width:70px;height:16px;background:#6b5916"></div>
<div style="position:absolute;left:1364px;top:493px;width:42px;height:16px;background:#6b5916"></div>
<div style="position:absolute;left:1715px;top:493px;width:14px;height:16px;background:#6b5916"></div>
<div style="position:absolute;left:1539px;top:493px;width:126px;height:16px;background:#6b5916"></div>
<div style="position:absolute;left:1771px;top:493px;width:42px;height:16px;background:#6b5916"></div>
<div style="position:absolute;left:1448px;top:509px;width:21px;height:16px;background:#6b5916"></div>
<div style="position:absolute;left:1743px;top:509px;width:7px;height:16px;background:#6b5916"></div>
<div style="position:absolute;left:1490px;top:509px;width:21px;height:16px;background:#6b5916"></div>
<div style="position:absolute;left:1757px;top:509px;width:7px;height:16px;background:#6b5916"></div>
<div style="position:absolute;left:1539px;top:509px;width:21px;height:16px;background:#6b5916"></div>
<div style="position:absolute;left:1771px;top:509px;width:7px;height:16px;background:#6b5916"></div>
<div style="position:absolute;left:1581px;top:509px;width:21px;height:16px;background:#6b5916"></div>
<div style="position:absolute;left:1785px;top:509px;width:7px;height:16px;background:#6b5916"></div>
<div style="position:absolute;left:1623px;top:509px;width:21px;height:16px;background:#6b5916"></div>
<div style="position:absolute;left:1799px;top:509px;width:7px;height:16px;background:#6b5916"></div>
<div style="position:absolute;left:1665px;top:509px;width:21px;height:16px;background:#6b5916"></div>
<div style="position:absolute;left:1813px;top:509px;width:7px;height:16px;background:#6b5916"></div>
<div style="position:absolute;left:1364px;top:525px;width:21px;height:16px;background:#6b5916"></div>
<div style="position:absolute;left:1715px;top:525px;width:7px;height:16px;background:#6b5916"></div>
<div style="position:absolute;left:1406px;top:525px;width:21px;height:16px;background:#6b5916"></div>
<div style="position:absolute;left:1729px;top:525px;width:7px;height:16px;background:#6b5916"></div>
<div style="position:absolute;left:1448px;top:525px;width:21px;height:16px;background:#6b5916"></div>
<div style="position:absolute;left:1743px;top:525px;width:7px;height:16px;background:#6b5916"></div>
<div style="position:absolute;left:1490px;top:525px;width:21px;height:16px;background:#6b5916"></div>
<div style="position:absolute;left:1757px;top:525px;width:7px;height:16px;background:#6b5916"></div>
<div style="position:absolute;left:1539px;top:525px;width:21px;height:16px;background:#6b5916"></div>
<div style="position:absolute;left:1771px;top:525px;width:7px;height:16px;background:#6b5916"></div>
<div style="position:absolute;left:1581px;top:525px;width:21px;height:16px;background:#6b5916"></div>
<div style="position:absolute;left:1785px;top:525px;width:7px;height:16px;background:#6b5916"></div>
<div style="position:absolute;left:1623px;top:525px;width:21px;height:16px;background:#6b5916"></div>
<div style="position:absolute;left:1799px;top:525px;width:7px;height:16px;background:#6b5916"></div>
<div style="position:absolute;left:1665px;top:525px;width:21px;height:16px;background:#6b5916"></div>
<div style="position:absolute;left:1813px;top:525px;width:7px;height:16px;background:#6b5916"></div>
<div style="position:absolute;left:1364px;top:541px;width:21px;height:16px;background:#6b5916"></div>
<div style="position:absolute;left:1715px;top:541px;width:7px;height:16px;background:#6b5916"></div>
<div style="position:absolute;left:1406px;top:541px;width:21px;height:16px;background:#6b5916"></div>
<div style="position:absolute;left:1729px;top:541px;width:7px;height:16px;background:#6b5916"></div>
<div style="position:absolute;left:1448px;top:541px;width:21px;height:16px;background:#6b5916"></div>
<div style="position:absolute;left:1743px;top:541px;width:7px;height:16px;background:#6b5916"></div>
<div style="position:absolute;left:1490px;top:541px;width:21px;height:16px;background:#6b5916"></div>
<div style="position:absolute;left:1757px;top:541px;width:7px;height:16px;background:#6b5916"></div>
<div style="position:absolute;left:1539px;top:541px;width:21px;height:16px;background:#6b5916"></div>
<div style="position:absolute;left:1771px;top:541px;width:7px;height:16px;background:#6b5916"></div>
<div style="position:absolute;left:1581px;top:541px;width:21px;height:16px;background:#6b5916"></div>
<div style="position:absolute;left:1785px;top:541px;width:7px;height:16px;background:#6b5916"></div>
<div style="position:absolute;left:1623px;top:541px;width:21px;height:16px;background:#6b5916"></div>
<div style="position:absolute;left:1799px;top:541px;width:7px;height:16px;background:#6b5916"></div>
<div style="position:absolute;left:1665px;top:541px;width:21px;height:16px;background:#6b5916"></div>
<div style="position:absolute;left:1813px;top:541px;width:7px;height:16px;background:#6b5916"></div>
<div style="position:absolute;left:1364px;top:557px;width:21px;height:16px;background:#6b5916"></div>
<div style="position:absolute;left:1715px;top:557px;width:7px;height:16px;background:#6b5916"></div>
<div style="position:absolute;left:1406px;top:557px;width:21px;height:16px;background:#6b5916"></div>
<div style="position:absolute;left:1729px;top:557px;width:7px;height:16px;background:#6b5916"></div>
<div style="position:absolute;left:1448px;top:557px;width:259px;height:16px;background:#6b5916"></div>
<div style="position:absolute;left:1743px;top:557px;width:84px;height:16px;background:#6b5916"></div>
<div style="position:absolute;left:1364px;top:573px;width:343px;height:16px;background:#6b5916"></div>
<div style="position:absolute;left:1715px;top:573px;width:112px;height:16px;background:#6b5916"></div>
<div style="position:absolute;left:1364px;top:589px;width:168px;height:16px;background:#6b5916"></div>
<div style="position:absolute;left:1715px;top:589px;width:56px;height:16px;background:#6b5916"></div>
<div style="position:absolute;left:1364px;top:685px;width:259px;height:16px;background:#6b5916"></div>
<div style="position:absolute;left:1715px;top:685px;width:84px;height:16px;background:#6b5916"></div>
<div style="position:absolute;left:1644px;top:685px;width:21px;height:16px;background:#6b5916"></div>
<div style="position:absolute;left:1806px;top:685px;width:7px;height:16px;background:#6b5916"></div>
<div class="m" style="left:1291px;top:175px;color:#f2f2f2;">00000000:</div>
<div class="m" style="left:1367px;top:175px;color:#f2f2f2;"><span style="color:#f2f2f2">F8</span> <span style="color:#f2f2f2">59</span> <span style="color:#f2f2f2">CD</span> <span style="color:#f2f2f2">ED</span> <span style="color:#f2f2f2">F8</span> <span style="color:#f2f2f2">59</span> <span style="color:#f2f2f2">CD</span> <span style="color:#f2f2f2">ED</span>  <span style="color:#f2f2f2">F8</span> <span style="color:#f2f2f2">59</span> <span style="color:#f2f2f2">CD</span> <span style="color:#f2f2f2">ED</span> <span style="color:#f2f2f2">01</span> <span style="color:#f2f2f2">01</span> <span style="color:#f2f2f2">01</span> <span style="color:#8e8e8e">00</span></div>
<div class="m" style="left:1715px;top:175px;color:#f2f2f2;"><span style="color:#8e8e8e">.</span><span style="color:#f2f2f2">Y</span><span style="color:#8e8e8e">...</span><span style="color:#f2f2f2">Y</span><span style="color:#8e8e8e">...</span><span style="color:#f2f2f2">Y</span><span style="color:#8e8e8e">......</span></div>
<div class="m" style="left:1291px;top:191px;color:#f2f2f2;">00000010:</div>
<div class="m" style="left:1367px;top:191px;color:#f2f2f2;"><span style="color:#f2f2f2">4A</span> <span style="color:#f2f2f2">54</span> <span style="color:#f2f2f2">4A</span> <span style="color:#f2f2f2">42</span> <span style="color:#f2f2f2">41</span> <span style="color:#f2f2f2">52</span> <span style="color:#f2f2f2">42</span> <span style="color:#f2f2f2">5A</span>  <span style="color:#f2f2f2">39</span> <span style="color:#f2f2f2">30</span> <span style="color:#f2f2f2">32</span> <span style="color:#f2f2f2">30</span> <span style="color:#f2f2f2">35</span> <span style="color:#f2f2f2">34</span> <span style="color:#f2f2f2">39</span> <span style="color:#f2f2f2">30</span></div>
<div class="m" style="left:1715px;top:191px;color:#f2f2f2;"><span style="color:#f2f2f2">JTJBARBZ90205490</span></div>
<div class="m" style="left:1291px;top:207px;color:#f2f2f2;">00000020:</div>
<div class="m" style="left:1367px;top:207px;color:#f2f2f2;"><span style="color:#f2f2f2">34</span> <span style="color:#f2f2f2">4A</span> <span style="color:#f2f2f2">54</span> <span style="color:#f2f2f2">4A</span> <span style="color:#f2f2f2">42</span> <span style="color:#f2f2f2">41</span> <span style="color:#f2f2f2">52</span> <span style="color:#f2f2f2">42</span>  <span style="color:#f2f2f2">5A</span> <span style="color:#f2f2f2">39</span> <span style="color:#f2f2f2">30</span> <span style="color:#f2f2f2">32</span> <span style="color:#f2f2f2">30</span> <span style="color:#f2f2f2">35</span> <span style="color:#f2f2f2">34</span> <span style="color:#f2f2f2">39</span></div>
<div class="m" style="left:1715px;top:207px;color:#f2f2f2;"><span style="color:#f2f2f2">4JTJBARBZ9020549</span></div>
<div class="m" style="left:1291px;top:223px;color:#f2f2f2;">00000030:</div>
<div class="m" style="left:1367px;top:223px;color:#f2f2f2;"><span style="color:#f2f2f2">30</span> <span style="color:#f2f2f2">34</span> <span style="color:#f2f2f2">4A</span> <span style="color:#f2f2f2">54</span> <span style="color:#f2f2f2">4A</span> <span style="color:#f2f2f2">42</span> <span style="color:#f2f2f2">41</span> <span style="color:#f2f2f2">52</span>  <span style="color:#f2f2f2">42</span> <span style="color:#f2f2f2">5A</span> <span style="color:#f2f2f2">39</span> <span style="color:#f2f2f2">30</span> <span style="color:#f2f2f2">32</span> <span style="color:#f2f2f2">30</span> <span style="color:#f2f2f2">35</span> <span style="color:#f2f2f2">34</span></div>
<div class="m" style="left:1715px;top:223px;color:#f2f2f2;"><span style="color:#f2f2f2">04JTJBARBZ902054</span></div>
<div class="m" style="left:1291px;top:239px;color:#f2f2f2;">00000040:</div>
<div class="m" style="left:1367px;top:239px;color:#f2f2f2;"><span style="color:#f2f2f2">39</span> <span style="color:#f2f2f2">30</span> <span style="color:#f2f2f2">34</span> <span style="color:#8e8e8e">00</span> <span style="color:#8e8e8e">00</span> <span style="color:#8e8e8e">00</span> <span style="color:#8e8e8e">00</span> <span style="color:#8e8e8e">00</span>  <span style="color:#8e8e8e">00</span> <span style="color:#8e8e8e">00</span> <span style="color:#8e8e8e">00</span> <span style="color:#8e8e8e">00</span> <span style="color:#8e8e8e">00</span> <span style="color:#8e8e8e">00</span> <span style="color:#8e8e8e">00</span> <span style="color:#8e8e8e">00</span></div>
<div class="m" style="left:1715px;top:239px;color:#f2f2f2;"><span style="color:#f2f2f2">904</span><span style="color:#8e8e8e">.............</span></div>
<div class="m" style="left:1291px;top:255px;color:#f2f2f2;">00000050:</div>
<div class="m" style="left:1367px;top:255px;color:#f2f2f2;"><span style="color:#8e8e8e">00</span> <span style="color:#8e8e8e">00</span> <span style="color:#8e8e8e">00</span> <span style="color:#8e8e8e">00</span> <span style="color:#8e8e8e">00</span> <span style="color:#8e8e8e">00</span> <span style="color:#8e8e8e">00</span> <span style="color:#8e8e8e">00</span>  <span style="color:#8e8e8e">00</span> <span style="color:#8e8e8e">00</span> <span style="color:#8e8e8e">00</span> <span style="color:#8e8e8e">00</span> <span style="color:#8e8e8e">00</span> <span style="color:#8e8e8e">00</span> <span style="color:#8e8e8e">00</span> <span style="color:#8e8e8e">00</span></div>
<div class="m" style="left:1715px;top:255px;color:#f2f2f2;"><span style="color:#8e8e8e">................</span></div>
<div class="m" style="left:1291px;top:271px;color:#f2f2f2;">00000060:</div>
<div class="m" style="left:1367px;top:271px;color:#f2f2f2;"><span style="color:#8e8e8e">00</span> <span style="color:#8e8e8e">00</span> <span style="color:#8e8e8e">00</span> <span style="color:#8e8e8e">00</span> <span style="color:#8e8e8e">00</span> <span style="color:#8e8e8e">00</span> <span style="color:#8e8e8e">00</span> <span style="color:#f2f2f2">55</span>  <span style="color:#8e8e8e">00</span> <span style="color:#8e8e8e">00</span> <span style="color:#8e8e8e">00</span> <span style="color:#8e8e8e">00</span> <span style="color:#8e8e8e">00</span> <span style="color:#8e8e8e">00</span> <span style="color:#8e8e8e">00</span> <span style="color:#8e8e8e">00</span></div>
<div class="m" style="left:1715px;top:271px;color:#f2f2f2;"><span style="color:#8e8e8e">.......</span><span style="color:#f2f2f2">U</span><span style="color:#8e8e8e">........</span></div>
<div class="m" style="left:1291px;top:287px;color:#f2f2f2;">00000070:</div>
<div class="m" style="left:1367px;top:287px;color:#f2f2f2;"><span style="color:#8e8e8e">00</span> <span style="color:#8e8e8e">00</span> <span style="color:#8e8e8e">00</span> <span style="color:#8e8e8e">00</span> <span style="color:#8e8e8e">00</span> <span style="color:#8e8e8e">00</span> <span style="color:#8e8e8e">00</span> <span style="color:#8e8e8e">00</span>  <span style="color:#8e8e8e">00</span> <span style="color:#8e8e8e">00</span> <span style="color:#8e8e8e">00</span> <span style="color:#8e8e8e">00</span> <span style="color:#8e8e8e">00</span> <span style="color:#8e8e8e">00</span> <span style="color:#8e8e8e">00</span> <span style="color:#8e8e8e">00</span></div>
<div class="m" style="left:1715px;top:287px;color:#f2f2f2;"><span style="color:#8e8e8e">................</span></div>
<div class="m" style="left:1291px;top:303px;color:#f2f2f2;">00000080:</div>
<div class="m" style="left:1367px;top:303px;color:#f2f2f2;"><span style="color:#8e8e8e">00</span> <span style="color:#8e8e8e">00</span> <span style="color:#8e8e8e">00</span> <span style="color:#8e8e8e">00</span> <span style="color:#8e8e8e">00</span> <span style="color:#8e8e8e">00</span> <span style="color:#8e8e8e">00</span> <span style="color:#8e8e8e">00</span>  <span style="color:#8e8e8e">00</span> <span style="color:#8e8e8e">00</span> <span style="color:#8e8e8e">00</span> <span style="color:#8e8e8e">00</span> <span style="color:#8e8e8e">00</span> <span style="color:#8e8e8e">00</span> <span style="color:#8e8e8e">00</span> <span style="color:#8e8e8e">00</span></div>
<div class="m" style="left:1715px;top:303px;color:#f2f2f2;"><span style="color:#8e8e8e">................</span></div>
<div class="m" style="left:1291px;top:319px;color:#f2f2f2;">00000090:</div>
<div class="m" style="left:1367px;top:319px;color:#f2f2f2;"><span style="color:#8e8e8e">00</span> <span style="color:#8e8e8e">00</span> <span style="color:#8e8e8e">00</span> <span style="color:#8e8e8e">00</span> <span style="color:#8e8e8e">00</span> <span style="color:#8e8e8e">00</span> <span style="color:#8e8e8e">00</span> <span style="color:#8e8e8e">00</span>  <span style="color:#8e8e8e">00</span> <span style="color:#8e8e8e">00</span> <span style="color:#8e8e8e">00</span> <span style="color:#8e8e8e">00</span> <span style="color:#8e8e8e">00</span> <span style="color:#8e8e8e">00</span> <span style="color:#8e8e8e">00</span> <span style="color:#8e8e8e">00</span></div>
<div class="m" style="left:1715px;top:319px;color:#f2f2f2;"><span style="color:#8e8e8e">................</span></div>
<div class="m" style="left:1291px;top:335px;color:#f2f2f2;">000000A0:</div>
<div class="m" style="left:1367px;top:335px;color:#f2f2f2;"><span style="color:#8e8e8e">00</span> <span style="color:#f2f2f2">FF</span> <span style="color:#8e8e8e">00</span> <span style="color:#8e8e8e">00</span> <span style="color:#8e8e8e">00</span> <span style="color:#8e8e8e">00</span> <span style="color:#8e8e8e">00</span> <span style="color:#8e8e8e">00</span>  <span style="color:#8e8e8e">00</span> <span style="color:#8e8e8e">00</span> <span style="color:#8e8e8e">00</span> <span style="color:#8e8e8e">00</span> <span style="color:#8e8e8e">00</span> <span style="color:#8e8e8e">00</span> <span style="color:#8e8e8e">00</span> <span style="color:#8e8e8e">00</span></div>
<div class="m" style="left:1715px;top:335px;color:#f2f2f2;"><span style="color:#8e8e8e">................</span></div>
<div class="m" style="left:1291px;top:351px;color:#f2f2f2;">000000B0:</div>
<div class="m" style="left:1367px;top:351px;color:#f2f2f2;"><span style="color:#8e8e8e">00</span> <span style="color:#8e8e8e">00</span> <span style="color:#8e8e8e">00</span> <span style="color:#8e8e8e">00</span> <span style="color:#8e8e8e">00</span> <span style="color:#8e8e8e">00</span> <span style="color:#8e8e8e">00</span> <span style="color:#8e8e8e">00</span>  <span style="color:#8e8e8e">00</span> <span style="color:#8e8e8e">00</span> <span style="color:#8e8e8e">00</span> <span style="color:#8e8e8e">00</span> <span style="color:#8e8e8e">00</span> <span style="color:#8e8e8e">00</span> <span style="color:#8e8e8e">00</span> <span style="color:#8e8e8e">00</span></div>
<div class="m" style="left:1715px;top:351px;color:#f2f2f2;"><span style="color:#8e8e8e">................</span></div>
<div class="m" style="left:1291px;top:367px;color:#f2f2f2;">000000C0:</div>
<div class="m" style="left:1367px;top:367px;color:#f2f2f2;"><span style="color:#f2f2f2">02</span> <span style="color:#f2f2f2">FF</span> <span style="color:#8e8e8e">00</span> <span style="color:#f2f2f2">02</span> <span style="color:#8e8e8e">00</span> <span style="color:#8e8e8e">00</span> <span style="color:#8e8e8e">00</span> <span style="color:#8e8e8e">00</span>  <span style="color:#8e8e8e">00</span> <span style="color:#8e8e8e">00</span> <span style="color:#8e8e8e">00</span> <span style="color:#8e8e8e">00</span> <span style="color:#8e8e8e">00</span> <span style="color:#8e8e8e">00</span> <span style="color:#8e8e8e">00</span> <span style="color:#8e8e8e">00</span></div>
<div class="m" style="left:1715px;top:367px;color:#f2f2f2;"><span style="color:#8e8e8e">................</span></div>
<div class="m" style="left:1291px;top:383px;color:#f2f2f2;">000000D0:</div>
<div class="m" style="left:1367px;top:383px;color:#f2f2f2;"><span style="color:#8e8e8e">00</span> <span style="color:#8e8e8e">00</span> <span style="color:#8e8e8e">00</span> <span style="color:#8e8e8e">00</span> <span style="color:#8e8e8e">00</span> <span style="color:#8e8e8e">00</span> <span style="color:#8e8e8e">00</span> <span style="color:#8e8e8e">00</span>  <span style="color:#8e8e8e">00</span> <span style="color:#8e8e8e">00</span> <span style="color:#8e8e8e">00</span> <span style="color:#8e8e8e">00</span> <span style="color:#8e8e8e">00</span> <span style="color:#8e8e8e">00</span> <span style="color:#8e8e8e">00</span> <span style="color:#8e8e8e">00</span></div>
<div class="m" style="left:1715px;top:383px;color:#f2f2f2;"><span style="color:#8e8e8e">................</span></div>
<div class="m" style="left:1291px;top:399px;color:#f2f2f2;">000000E0:</div>
<div class="m" style="left:1367px;top:399px;color:#f2f2f2;"><span style="color:#f2f2f2">02</span> <span style="color:#8e8e8e">00</span> <span style="color:#f2f2f2">02</span> <span style="color:#8e8e8e">00</span> <span style="color:#8e8e8e">00</span> <span style="color:#8e8e8e">00</span> <span style="color:#8e8e8e">00</span> <span style="color:#8e8e8e">00</span>  <span style="color:#8e8e8e">00</span> <span style="color:#8e8e8e">00</span> <span style="color:#8e8e8e">00</span> <span style="color:#8e8e8e">00</span> <span style="color:#8e8e8e">00</span> <span style="color:#8e8e8e">00</span> <span style="color:#8e8e8e">00</span> <span style="color:#8e8e8e">00</span></div>
<div class="m" style="left:1715px;top:399px;color:#f2f2f2;"><span style="color:#8e8e8e">................</span></div>
<div class="m" style="left:1291px;top:415px;color:#f2f2f2;">000000F0:</div>
<div class="m" style="left:1367px;top:415px;color:#f2f2f2;"><span style="color:#8e8e8e">00</span> <span style="color:#8e8e8e">00</span> <span style="color:#8e8e8e">00</span> <span style="color:#8e8e8e">00</span> <span style="color:#8e8e8e">00</span> <span style="color:#8e8e8e">00</span> <span style="color:#8e8e8e">00</span> <span style="color:#8e8e8e">00</span>  <span style="color:#8e8e8e">00</span> <span style="color:#8e8e8e">00</span> <span style="color:#8e8e8e">00</span> <span style="color:#8e8e8e">00</span> <span style="color:#8e8e8e">00</span> <span style="color:#8e8e8e">00</span> <span style="color:#8e8e8e">00</span> <span style="color:#8e8e8e">00</span></div>
<div class="m" style="left:1715px;top:415px;color:#f2f2f2;"><span style="color:#8e8e8e">................</span></div>
<div class="m" style="left:1291px;top:431px;color:#f2f2f2;">00000100:</div>
<div class="m" style="left:1367px;top:431px;color:#f2f2f2;"><span style="color:#f2f2f2">A5</span> <span style="color:#f2f2f2">5A</span> <span style="color:#f2f2f2">A5</span> <span style="color:#f2f2f2">5A</span> <span style="color:#f2f2f2">A5</span> <span style="color:#f2f2f2">5A</span> <span style="color:#f2f2f2">5A</span> <span style="color:#f2f2f2">A5</span>  <span style="color:#f2f2f2">5A</span> <span style="color:#f2f2f2">A5</span> <span style="color:#f2f2f2">5A</span> <span style="color:#f2f2f2">A5</span> <span style="color:#8e8e8e">00</span> <span style="color:#f2f2f2">F4</span> <span style="color:#8e8e8e">00</span> <span style="color:#f2f2f2">F4</span></div>
<div class="m" style="left:1715px;top:431px;color:#f2f2f2;"><span style="color:#8e8e8e">.</span><span style="color:#f2f2f2">Z</span><span style="color:#8e8e8e">.</span><span style="color:#f2f2f2">Z</span><span style="color:#8e8e8e">.</span><span style="color:#f2f2f2">ZZ</span><span style="color:#8e8e8e">.</span><span style="color:#f2f2f2">Z</span><span style="color:#8e8e8e">.</span><span style="color:#f2f2f2">Z</span><span style="color:#8e8e8e">.....</span></div>
<div class="m" style="left:1291px;top:447px;color:#f2f2f2;">00000110:</div>
<div class="m" style="left:1367px;top:447px;color:#f2f2f2;"><span style="color:#8e8e8e">00</span> <span style="color:#f2f2f2">F4</span> <span style="color:#f2f2f2">1D</span> <span style="color:#f2f2f2">FF</span> <span style="color:#f2f2f2">1D</span> <span style="color:#f2f2f2">FF</span> <span style="color:#f2f2f2">1D</span> <span style="color:#f2f2f2">FF</span>  <span style="color:#8e8e8e">00</span> <span style="color:#8e8e8e">00</span> <span style="color:#8e8e8e">00</span> <span style="color:#8e8e8e">00</span> <span style="color:#8e8e8e">00</span> <span style="color:#8e8e8e">00</span> <span style="color:#f2f2f2">B3</span> <span style="color:#f2f2f2">FF</span></div>
<div class="m" style="left:1715px;top:447px;color:#f2f2f2;"><span style="color:#8e8e8e">................</span></div>
<div class="m" style="left:1291px;top:463px;color:#f2f2f2;">00000120:</div>
<div class="m" style="left:1367px;top:463px;color:#f2f2f2;"><span style="color:#f2f2f2">B3</span> <span style="color:#f2f2f2">FF</span> <span style="color:#f2f2f2">B3</span> <span style="color:#f2f2f2">FF</span> <span style="color:#8e8e8e">00</span> <span style="color:#f2f2f2">2C</span> <span style="color:#8e8e8e">00</span> <span style="color:#f2f2f2">2C</span>  <span style="color:#8e8e8e">00</span> <span style="color:#f2f2f2">2C</span> <span style="color:#f2f2f2">5B</span> <span style="color:#f2f2f2">FF</span> <span style="color:#f2f2f2">5B</span> <span style="color:#f2f2f2">FF</span> <span style="color:#f2f2f2">5B</span> <span style="color:#f2f2f2">FF</span></div>
<div class="m" style="left:1715px;top:463px;color:#f2f2f2;"><span style="color:#8e8e8e">.....</span><span style="color:#f2f2f2">,</span><span style="color:#8e8e8e">.</span><span style="color:#f2f2f2">,</span><span style="color:#8e8e8e">.</span><span style="color:#f2f2f2">,[</span><span style="color:#8e8e8e">.</span><span style="color:#f2f2f2">[</span><span style="color:#8e8e8e">.</span><span style="color:#f2f2f2">[</span><span style="color:#8e8e8e">.</span></div>
<div class="m" style="left:1291px;top:479px;color:#f2f2f2;">00000130:</div>
<div class="m" style="left:1367px;top:479px;color:#f2f2f2;"><span style="color:#8e8e8e">00</span> <span style="color:#8e8e8e">00</span> <span style="color:#8e8e8e">00</span> <span style="color:#8e8e8e">00</span> <span style="color:#8e8e8e">00</span> <span style="color:#8e8e8e">00</span> <span style="color:#f2f2f2">94</span> <span style="color:#f2f2f2">FF</span>  <span style="color:#f2f2f2">94</span> <span style="color:#f2f2f2">FF</span> <span style="color:#f2f2f2">94</span> <span style="color:#f2f2f2">FF</span> <span style="color:#f2f2f2">6F</span> <span style="color:#f2f2f2">F9</span> <span style="color:#f2f2f2">6F</span> <span style="color:#f2f2f2">F9</span></div>
<div class="m" style="left:1715px;top:479px;color:#f2f2f2;"><span style="color:#8e8e8e">............</span><span style="color:#f2f2f2">o</span><span style="color:#8e8e8e">.</span><span style="color:#f2f2f2">o</span><span style="color:#8e8e8e">.</span></div>
<div class="m" style="left:1291px;top:495px;color:#f2f2f2;">00000140:</div>
<div class="m" style="left:1367px;top:495px;color:#f2f2f2;"><span style="color:#f2f2f2">6F</span> <span style="color:#f2f2f2">F9</span> <span style="color:#8e8e8e">00</span> <span style="color:#8e8e8e">00</span> <span style="color:#8e8e8e">00</span> <span style="color:#8e8e8e">00</span> <span style="color:#8e8e8e">00</span> <span style="color:#8e8e8e">00</span>  <span style="color:#f2f2f2">BD</span> <span style="color:#f2f2f2">1A</span> <span style="color:#f2f2f2">BD</span> <span style="color:#f2f2f2">1A</span> <span style="color:#f2f2f2">BD</span> <span style="color:#f2f2f2">1A</span> <span style="color:#8e8e8e">00</span> <span style="color:#8e8e8e">00</span></div>
<div class="m" style="left:1715px;top:495px;color:#f2f2f2;"><span style="color:#f2f2f2">o</span><span style="color:#8e8e8e">...............</span></div>
<div class="m" style="left:1291px;top:511px;color:#f2f2f2;">00000150:</div>
<div class="m" style="left:1367px;top:511px;color:#f2f2f2;"><span style="color:#8e8e8e">00</span> <span style="color:#8e8e8e">00</span> <span style="color:#8e8e8e">00</span> <span style="color:#8e8e8e">00</span> <span style="color:#f2f2f2">02</span> <span style="color:#8e8e8e">00</span> <span style="color:#f2f2f2">02</span> <span style="color:#8e8e8e">00</span>  <span style="color:#f2f2f2">02</span> <span style="color:#8e8e8e">00</span> <span style="color:#f2f2f2">01</span> <span style="color:#8e8e8e">00</span> <span style="color:#f2f2f2">01</span> <span style="color:#8e8e8e">00</span> <span style="color:#f2f2f2">01</span> <span style="color:#8e8e8e">00</span></div>
<div class="m" style="left:1715px;top:511px;color:#f2f2f2;"><span style="color:#8e8e8e">................</span></div>
<div class="m" style="left:1291px;top:527px;color:#f2f2f2;">00000160:</div>
<div class="m" style="left:1367px;top:527px;color:#f2f2f2;"><span style="color:#f2f2f2">03</span> <span style="color:#8e8e8e">00</span> <span style="color:#f2f2f2">03</span> <span style="color:#8e8e8e">00</span> <span style="color:#f2f2f2">03</span> <span style="color:#8e8e8e">00</span> <span style="color:#f2f2f2">02</span> <span style="color:#8e8e8e">00</span>  <span style="color:#f2f2f2">02</span> <span style="color:#8e8e8e">00</span> <span style="color:#f2f2f2">02</span> <span style="color:#8e8e8e">00</span> <span style="color:#f2f2f2">05</span> <span style="color:#8e8e8e">00</span> <span style="color:#f2f2f2">05</span> <span style="color:#8e8e8e">00</span></div>
<div class="m" style="left:1715px;top:527px;color:#f2f2f2;"><span style="color:#8e8e8e">................</span></div>
<div class="m" style="left:1291px;top:543px;color:#f2f2f2;">00000170:</div>
<div class="m" style="left:1367px;top:543px;color:#f2f2f2;"><span style="color:#f2f2f2">05</span> <span style="color:#8e8e8e">00</span> <span style="color:#f2f2f2">02</span> <span style="color:#8e8e8e">00</span> <span style="color:#f2f2f2">02</span> <span style="color:#8e8e8e">00</span> <span style="color:#f2f2f2">02</span> <span style="color:#8e8e8e">00</span>  <span style="color:#f2f2f2">03</span> <span style="color:#8e8e8e">00</span> <span style="color:#f2f2f2">03</span> <span style="color:#8e8e8e">00</span> <span style="color:#f2f2f2">03</span> <span style="color:#8e8e8e">00</span> <span style="color:#f2f2f2">02</span> <span style="color:#8e8e8e">00</span></div>
<div class="m" style="left:1715px;top:543px;color:#f2f2f2;"><span style="color:#8e8e8e">................</span></div>
<div class="m" style="left:1291px;top:559px;color:#f2f2f2;">00000180:</div>
<div class="m" style="left:1367px;top:559px;color:#f2f2f2;"><span style="color:#f2f2f2">02</span> <span style="color:#8e8e8e">00</span> <span style="color:#f2f2f2">02</span> <span style="color:#8e8e8e">00</span> <span style="color:#f2f2f2">76</span> <span style="color:#f2f2f2">1F</span> <span style="color:#f2f2f2">76</span> <span style="color:#f2f2f2">1F</span>  <span style="color:#f2f2f2">76</span> <span style="color:#f2f2f2">1F</span> <span style="color:#f2f2f2">7F</span> <span style="color:#f2f2f2">1F</span> <span style="color:#f2f2f2">7F</span> <span style="color:#f2f2f2">1F</span> <span style="color:#f2f2f2">7F</span> <span style="color:#f2f2f2">1F</span></div>
<div class="m" style="left:1715px;top:559px;color:#f2f2f2;"><span style="color:#8e8e8e">....</span><span style="color:#f2f2f2">v</span><span style="color:#8e8e8e">.</span><span style="color:#f2f2f2">v</span><span style="color:#8e8e8e">.</span><span style="color:#f2f2f2">v</span><span style="color:#8e8e8e">.......</span></div>
<div class="m" style="left:1291px;top:575px;color:#f2f2f2;">00000190:</div>
<div class="m" style="left:1367px;top:575px;color:#f2f2f2;"><span style="color:#f2f2f2">A5</span> <span style="color:#f2f2f2">5A</span> <span style="color:#f2f2f2">A5</span> <span style="color:#f2f2f2">5A</span> <span style="color:#f2f2f2">A5</span> <span style="color:#f2f2f2">5A</span> <span style="color:#f2f2f2">5A</span> <span style="color:#f2f2f2">A5</span>  <span style="color:#f2f2f2">5A</span> <span style="color:#f2f2f2">A5</span> <span style="color:#f2f2f2">5A</span> <span style="color:#f2f2f2">A5</span> <span style="color:#f2f2f2">86</span> <span style="color:#f2f2f2">FB</span> <span style="color:#f2f2f2">86</span> <span style="color:#f2f2f2">FB</span></div>
<div class="m" style="left:1715px;top:575px;color:#f2f2f2;"><span style="color:#8e8e8e">.</span><span style="color:#f2f2f2">Z</span><span style="color:#8e8e8e">.</span><span style="color:#f2f2f2">Z</span><span style="color:#8e8e8e">.</span><span style="color:#f2f2f2">ZZ</span><span style="color:#8e8e8e">.</span><span style="color:#f2f2f2">Z</span><span style="color:#8e8e8e">.</span><span style="color:#f2f2f2">Z</span><span style="color:#8e8e8e">.....</span></div>
<div class="m" style="left:1291px;top:591px;color:#f2f2f2;">000001A0:</div>
<div class="m" style="left:1367px;top:591px;color:#f2f2f2;"><span style="color:#f2f2f2">86</span> <span style="color:#f2f2f2">FB</span> <span style="color:#f2f2f2">4E</span> <span style="color:#f2f2f2">1B</span> <span style="color:#f2f2f2">4E</span> <span style="color:#f2f2f2">1B</span> <span style="color:#f2f2f2">4E</span> <span style="color:#f2f2f2">1B</span>  <span style="color:#8e8e8e">00</span> <span style="color:#8e8e8e">00</span> <span style="color:#8e8e8e">00</span> <span style="color:#8e8e8e">00</span> <span style="color:#8e8e8e">00</span> <span style="color:#8e8e8e">00</span> <span style="color:#8e8e8e">00</span> <span style="color:#8e8e8e">00</span></div>
<div class="m" style="left:1715px;top:591px;color:#f2f2f2;"><span style="color:#8e8e8e">..</span><span style="color:#f2f2f2">N</span><span style="color:#8e8e8e">.</span><span style="color:#f2f2f2">N</span><span style="color:#8e8e8e">.</span><span style="color:#f2f2f2">N</span><span style="color:#8e8e8e">.........</span></div>
<div class="m" style="left:1291px;top:607px;color:#f2f2f2;">000001B0:</div>
<div class="m" style="left:1367px;top:607px;color:#f2f2f2;"><span style="color:#8e8e8e">00</span> <span style="color:#8e8e8e">00</span> <span style="color:#8e8e8e">00</span> <span style="color:#8e8e8e">00</span> <span style="color:#8e8e8e">00</span> <span style="color:#8e8e8e">00</span> <span style="color:#8e8e8e">00</span> <span style="color:#8e8e8e">00</span>  <span style="color:#8e8e8e">00</span> <span style="color:#8e8e8e">00</span> <span style="color:#8e8e8e">00</span> <span style="color:#8e8e8e">00</span> <span style="color:#8e8e8e">00</span> <span style="color:#8e8e8e">00</span> <span style="color:#8e8e8e">00</span> <span style="color:#8e8e8e">00</span></div>
<div class="m" style="left:1715px;top:607px;color:#f2f2f2;"><span style="color:#8e8e8e">................</span></div>
<div class="m" style="left:1291px;top:623px;color:#f2f2f2;">000001C0:</div>
<div class="m" style="left:1367px;top:623px;color:#f2f2f2;"><span style="color:#8e8e8e">00</span> <span style="color:#8e8e8e">00</span> <span style="color:#8e8e8e">00</span> <span style="color:#8e8e8e">00</span> <span style="color:#8e8e8e">00</span> <span style="color:#8e8e8e">00</span> <span style="color:#8e8e8e">00</span> <span style="color:#8e8e8e">00</span>  <span style="color:#8e8e8e">00</span> <span style="color:#8e8e8e">00</span> <span style="color:#8e8e8e">00</span> <span style="color:#8e8e8e">00</span> <span style="color:#8e8e8e">00</span> <span style="color:#8e8e8e">00</span> <span style="color:#8e8e8e">00</span> <span style="color:#8e8e8e">00</span></div>
<div class="m" style="left:1715px;top:623px;color:#f2f2f2;"><span style="color:#8e8e8e">................</span></div>
<div class="m" style="left:1291px;top:639px;color:#f2f2f2;">000001D0:</div>
<div class="m" style="left:1367px;top:639px;color:#f2f2f2;"><span style="color:#8e8e8e">00</span> <span style="color:#8e8e8e">00</span> <span style="color:#8e8e8e">00</span> <span style="color:#8e8e8e">00</span> <span style="color:#8e8e8e">00</span> <span style="color:#8e8e8e">00</span> <span style="color:#8e8e8e">00</span> <span style="color:#8e8e8e">00</span>  <span style="color:#8e8e8e">00</span> <span style="color:#8e8e8e">00</span> <span style="color:#8e8e8e">00</span> <span style="color:#8e8e8e">00</span> <span style="color:#8e8e8e">00</span> <span style="color:#8e8e8e">00</span> <span style="color:#8e8e8e">00</span> <span style="color:#8e8e8e">00</span></div>
<div class="m" style="left:1715px;top:639px;color:#f2f2f2;"><span style="color:#8e8e8e">................</span></div>
<div class="m" style="left:1291px;top:655px;color:#f2f2f2;">000001E0:</div>
<div class="m" style="left:1367px;top:655px;color:#f2f2f2;"><span style="color:#8e8e8e">00</span> <span style="color:#8e8e8e">00</span> <span style="color:#8e8e8e">00</span> <span style="color:#8e8e8e">00</span> <span style="color:#8e8e8e">00</span> <span style="color:#8e8e8e">00</span> <span style="color:#8e8e8e">00</span> <span style="color:#8e8e8e">00</span>  <span style="color:#8e8e8e">00</span> <span style="color:#8e8e8e">00</span> <span style="color:#8e8e8e">00</span> <span style="color:#8e8e8e">00</span> <span style="color:#8e8e8e">00</span> <span style="color:#8e8e8e">00</span> <span style="color:#8e8e8e">00</span> <span style="color:#8e8e8e">00</span></div>
<div class="m" style="left:1715px;top:655px;color:#f2f2f2;"><span style="color:#8e8e8e">................</span></div>
<div class="m" style="left:1291px;top:671px;color:#f2f2f2;">000001F0:</div>
<div class="m" style="left:1367px;top:671px;color:#f2f2f2;"><span style="color:#8e8e8e">00</span> <span style="color:#8e8e8e">00</span> <span style="color:#8e8e8e">00</span> <span style="color:#8e8e8e">00</span> <span style="color:#8e8e8e">00</span> <span style="color:#8e8e8e">00</span> <span style="color:#8e8e8e">00</span> <span style="color:#8e8e8e">00</span>  <span style="color:#8e8e8e">00</span> <span style="color:#8e8e8e">00</span> <span style="color:#8e8e8e">00</span> <span style="color:#8e8e8e">00</span> <span style="color:#8e8e8e">00</span> <span style="color:#8e8e8e">00</span> <span style="color:#8e8e8e">00</span> <span style="color:#8e8e8e">00</span></div>
<div class="m" style="left:1715px;top:671px;color:#f2f2f2;"><span style="color:#8e8e8e">................</span></div>
<div class="m" style="left:1291px;top:687px;color:#f2f2f2;">00000200:</div>
<div class="m" style="left:1367px;top:687px;color:#f2f2f2;"><span style="color:#f2f2f2">62</span> <span style="color:#f2f2f2">62</span> <span style="color:#f2f2f2">62</span> <span style="color:#f2f2f2">62</span> <span style="color:#f2f2f2">62</span> <span style="color:#f2f2f2">62</span> <span style="color:#f2f2f2">61</span> <span style="color:#f2f2f2">61</span>  <span style="color:#f2f2f2">61</span> <span style="color:#f2f2f2">61</span> <span style="color:#f2f2f2">61</span> <span style="color:#f2f2f2">61</span> <span style="color:#f2f2f2">A5</span> <span style="color:#f2f2f2">01</span> <span style="color:#8e8e8e">00</span> <span style="color:#8e8e8e">00</span></div>
<div class="m" style="left:1715px;top:687px;color:#f2f2f2;"><span style="color:#f2f2f2">bbbbbbaaaaaa</span><span style="color:#8e8e8e">....</span></div>
<div class="m" style="left:1291px;top:703px;color:#f2f2f2;height:9px;overflow:hidden;">00000210:</div>
<div class="m" style="left:1367px;top:703px;color:#f2f2f2;height:9px;overflow:hidden;"><span style="color:#8e8e8e">00</span> <span style="color:#8e8e8e">00</span> <span style="color:#f2f2f2">01</span> <span style="color:#f2f2f2">01</span> <span style="color:#8e8e8e">00</span> <span style="color:#8e8e8e">00</span> <span style="color:#8e8e8e">00</span> <span style="color:#f2f2f2">01</span>  <span style="color:#8e8e8e">00</span> <span style="color:#f2f2f2">01</span> <span style="color:#f2f2f2">FF</span> <span style="color:#8e8e8e">00</span> <span style="color:#8e8e8e">00</span> <span style="color:#8e8e8e">00</span> <span style="color:#8e8e8e">00</span> <span style="color:#8e8e8e">00</span></div>
<div class="m" style="left:1715px;top:703px;color:#f2f2f2;height:9px;overflow:hidden;"><span style="color:#8e8e8e">................</span></div>
<div style="position:absolute;left:1269px;top:147px;width:14px;height:566px;background:#0c0c0c"></div>
<div style="position:absolute;left:1272px;top:148px;width:8px;height:67px;background:#505050;border-radius:4px"></div>
<div style="position:absolute;left:1898px;top:147px;width:14px;height:566px;background:#0c0c0c"></div>
<div style="position:absolute;left:1901px;top:148px;width:8px;height:67px;background:#505050;border-radius:4px"></div>
<div style="position:absolute;left:663px;top:716px;width:620px;height:48px;border:1px solid #3c3c42"></div>
<div style="position:absolute;left:673px;top:726px;width:24px;height:22px;border:1px solid #2f86f0"></div>
<div class="s" style="left:678.7px;top:729.5px;font-size:10px;color:#e0e0e0;">Aa</div>
<div style="position:absolute;left:705px;top:726px;width:24px;height:22px;border:1px solid #2f86f0"></div>
<svg style="left:705px;top:726px" width="24" height="22"><path d="M12.5 3.8a4.6 4.6 0 0 1 2.9 8.2v1.3h-5.8v-1.3a4.6 4.6 0 0 1 2.9-8.2z" fill="#f0f0f0"/><path d="M10.9 13.7h3.2v1.6a1.6 1.6 0 0 1-3.2 0z" fill="none" stroke="#e0e0e0" stroke-width="1.1"/></svg>
<div style="position:absolute;left:737px;top:726px;width:24px;height:22px;border:1px solid #2f86f0"></div>
<div class="s" style="left:741.5px;top:729px;font-size:9.5px;color:#e0e0e0;">abc</div>
<div style="position:absolute;left:762px;top:726px;width:24px;height:22px;border:1px solid #1f5ea8"></div>
<svg style="left:762px;top:726px" width="24" height="22"><path d="M11.5 4.8H9.6a2.7 2.7 0 0 0 0 5.4h1.9 M11.5 4.8V16.6 M14.6 4.8V16.6 M9.6 4.8H16.3 M11 16.6H16" fill="none" stroke="#d8d8d8" stroke-width="1"/></svg>
<div style="position:absolute;left:786px;top:726px;width:25px;height:22px;border:1px solid #3a3a40"></div>
<svg style="left:786px;top:726px" width="25" height="22"><path d="M7.3 7l4.2-1.3 4.2 1.3 4.2-1.3v9.6l-4.2 1.3-4.2-1.3-4.2 1.3z M11.5 5.7v9.6 M15.7 7v9.6" fill="none" stroke="#e8e8e8" stroke-width="1.05" stroke-linejoin="round"/></svg>
<div style="position:absolute;left:811px;top:726px;width:25px;height:22px;border:1px solid #3a3a40"></div>
<svg style="left:811px;top:726px" width="25" height="22"><path d="M6.4 5.9h12.3v10.4h-12.3z M6.4 9.1h12.3 M6.4 11.8h12.3 M6.4 14.2h12.3 M10.5 5.9v10.4 M14.6 5.9v10.4" fill="none" stroke="#f0f0f0" stroke-width="1"/><rect x="6" y="5.4" width="13" height="1.6" fill="#f0f0f0"/></svg>
<div style="position:absolute;left:963px;top:726px;width:24px;height:22px;border:1px solid #3a3a40"></div>
<svg style="left:963px;top:726px" width="24" height="22"><path d="M5.5 11.5l6.5-6.5 6.5 6.5 M5.5 16l6.5-6.5 6.5 6.5" fill="none" stroke="#e8e8e8" stroke-width="1.1"/></svg>
<div style="position:absolute;left:1291px;top:716px;width:621px;height:48px;border:1px solid #3c3c42"></div>
<div style="position:absolute;left:1301px;top:726px;width:24px;height:22px;border:1px solid #2f86f0"></div>
<div class="s" style="left:1306.7px;top:729.5px;font-size:10px;color:#e0e0e0;">Aa</div>
<div style="position:absolute;left:1333px;top:726px;width:24px;height:22px;border:1px solid #2f86f0"></div>
<svg style="left:1333px;top:726px" width="24" height="22"><path d="M12.5 3.8a4.6 4.6 0 0 1 2.9 8.2v1.3h-5.8v-1.3a4.6 4.6 0 0 1 2.9-8.2z" fill="#f0f0f0"/><path d="M10.9 13.7h3.2v1.6a1.6 1.6 0 0 1-3.2 0z" fill="none" stroke="#e0e0e0" stroke-width="1.1"/></svg>
<div style="position:absolute;left:1365px;top:726px;width:24px;height:22px;border:1px solid #2f86f0"></div>
<div class="s" style="left:1369.5px;top:729px;font-size:9.5px;color:#e0e0e0;">abc</div>
<div style="position:absolute;left:1390px;top:726px;width:24px;height:22px;border:1px solid #1f5ea8"></div>
<svg style="left:1390px;top:726px" width="24" height="22"><path d="M11.5 4.8H9.6a2.7 2.7 0 0 0 0 5.4h1.9 M11.5 4.8V16.6 M14.6 4.8V16.6 M9.6 4.8H16.3 M11 16.6H16" fill="none" stroke="#d8d8d8" stroke-width="1"/></svg>
<div style="position:absolute;left:1414px;top:726px;width:25px;height:22px;border:1px solid #3a3a40"></div>
<svg style="left:1414px;top:726px" width="25" height="22"><path d="M7.3 7l4.2-1.3 4.2 1.3 4.2-1.3v9.6l-4.2 1.3-4.2-1.3-4.2 1.3z M11.5 5.7v9.6 M15.7 7v9.6" fill="none" stroke="#e8e8e8" stroke-width="1.05" stroke-linejoin="round"/></svg>
<div style="position:absolute;left:1439px;top:726px;width:25px;height:22px;border:1px solid #3a3a40"></div>
<svg style="left:1439px;top:726px" width="25" height="22"><path d="M6.4 5.9h12.3v10.4h-12.3z M6.4 9.1h12.3 M6.4 11.8h12.3 M6.4 14.2h12.3 M10.5 5.9v10.4 M14.6 5.9v10.4" fill="none" stroke="#f0f0f0" stroke-width="1"/><rect x="6" y="5.4" width="13" height="1.6" fill="#f0f0f0"/></svg>
<div style="position:absolute;left:1591px;top:726px;width:24px;height:22px;border:1px solid #3a3a40"></div>
<svg style="left:1591px;top:726px" width="24" height="22"><path d="M5.5 11.5l6.5-6.5 6.5 6.5 M5.5 16l6.5-6.5 6.5 6.5" fill="none" stroke="#e8e8e8" stroke-width="1.1"/></svg>
<div style="position:absolute;left:663px;top:770px;width:1249px;height:2px;background:#2a5a90"></div>
<div style="position:absolute;left:663px;top:776px;width:1249px;height:229px;border:1px solid #4a4a52"></div>
<div style="position:absolute;left:664px;top:777px;width:1234px;height:19px;background:#2e2e30"></div>
<div style="position:absolute;left:1898px;top:777px;width:14px;height:227px;background:#0c0c0c"></div>
<div style="position:absolute;left:1901px;top:779px;width:8px;height:13px;background:#505050;border-radius:4px"></div>
<div style="position:absolute;left:688px;top:777px;width:1px;height:227px;background:#4a4a52"></div>
<div style="position:absolute;left:802px;top:777px;width:1px;height:227px;background:#4a4a52"></div>
<div style="position:absolute;left:916px;top:777px;width:1px;height:227px;background:#4a4a52"></div>
<div style="position:absolute;left:664px;top:796px;width:1234px;height:1px;background:#4a4a52"></div>
<div class="m" style="left:693px;top:780px;color:#e6e6e6;">Provider A</div>
<div class="m" style="left:807px;top:780px;color:#e6e6e6;">Provider B</div>
<div class="m" style="left:921px;top:780px;color:#e6e6e6;">Changes</div>
<div style="position:absolute;left:664px;top:797px;width:1234px;height:207px;overflow:hidden">
<div style="position:absolute;left:0;top:19px;width:1234px;height:1px;background:#4a4a52"></div>
<div style="position:absolute;left:4px;top:1.5px;width:14px;height:14px;border:1.5px solid #f0b400;box-sizing:border-box"></div>
<div style="position:absolute;left:7.8px;top:5.9px;width:6.4px;height:6.4px;border-radius:50%;background:#f5c000"></div>
<div class="m" style="left:29px;top:3px;color:#f0f0f0">0x0000 - 0x000E</div>
<div class="m" style="left:143px;top:3px;color:#f0f0f0">0x0000 - 0x000E</div>
<div class="m" style="left:266.5px;top:3px;color:#a8a8a8">E9</div>
<div class="m" style="left:287.5px;top:3px;color:#a8a8a8">8C</div>
<div class="m" style="left:308.5px;top:3px;color:#a8a8a8">15</div>
<div class="m" style="left:329.5px;top:3px;color:#a8a8a8">26</div>
<div class="m" style="left:354.5px;top:3px;color:#a8a8a8">E9</div>
<div class="m" style="left:375.5px;top:3px;color:#a8a8a8">8C</div>
<div class="m" style="left:396.5px;top:3px;color:#a8a8a8">15</div>
<div class="m" style="left:417.5px;top:3px;color:#a8a8a8">26</div>
<div class="m" style="left:442.5px;top:3px;color:#a8a8a8">E9</div>
<div class="m" style="left:463.5px;top:3px;color:#a8a8a8">8C</div>
<div class="m" style="left:484.5px;top:3px;color:#a8a8a8">15</div>
<div class="m" style="left:505.5px;top:3px;color:#a8a8a8">26</div>
<div class="m" style="left:530.5px;top:3px;color:#a8a8a8">00</div>
<div class="m" style="left:551.5px;top:3px;color:#a8a8a8">00</div>
<div class="m" style="left:572.5px;top:3px;color:#a8a8a8">00</div>
<svg style="left:602.0px;top:4px" width="13" height="12"><path d="M0.5 6h11 M6 0.8l5.3 5.2-5.3 5.2" fill="none" stroke="#ececec" stroke-width="1.05"/></svg>
<div class="m" style="left:630.5px;top:3px;color:#a8a8a8">F8</div>
<div class="m" style="left:651.5px;top:3px;color:#a8a8a8">59</div>
<div class="m" style="left:672.5px;top:3px;color:#a8a8a8">CD</div>
<div class="m" style="left:693.5px;top:3px;color:#a8a8a8">ED</div>
<div class="m" style="left:718.5px;top:3px;color:#a8a8a8">F8</div>
<div class="m" style="left:739.5px;top:3px;color:#a8a8a8">59</div>
<div class="m" style="left:760.5px;top:3px;color:#a8a8a8">CD</div>
<div class="m" style="left:781.5px;top:3px;color:#a8a8a8">ED</div>
<div class="m" style="left:806.5px;top:3px;color:#a8a8a8">F8</div>
<div class="m" style="left:827.5px;top:3px;color:#a8a8a8">59</div>
<div class="m" style="left:848.5px;top:3px;color:#a8a8a8">CD</div>
<div class="m" style="left:869.5px;top:3px;color:#a8a8a8">ED</div>
<div class="m" style="left:894.5px;top:3px;color:#a8a8a8">01</div>
<div class="m" style="left:915.5px;top:3px;color:#a8a8a8">01</div>
<div class="m" style="left:936.5px;top:3px;color:#a8a8a8">01</div>
<div style="position:absolute;left:0;top:39px;width:1234px;height:1px;background:#4a4a52"></div>
<div style="position:absolute;left:4px;top:21.5px;width:14px;height:14px;border:1.5px solid #f0b400;box-sizing:border-box"></div>
<div style="position:absolute;left:7.8px;top:25.9px;width:6.4px;height:6.4px;border-radius:50%;background:#f5c000"></div>
<div class="m" style="left:29px;top:23px;color:#f0f0f0">0x0067 - 0x0067</div>
<div class="m" style="left:143px;top:23px;color:#f0f0f0">0x0067 - 0x0067</div>
<div class="m" style="left:266.5px;top:23px;color:#a8a8a8">00</div>
<svg style="left:296.0px;top:24px" width="13" height="12"><path d="M0.5 6h11 M6 0.8l5.3 5.2-5.3 5.2" fill="none" stroke="#ececec" stroke-width="1.05"/></svg>
<div class="m" style="left:324.5px;top:23px;color:#a8a8a8">55</div>
<div style="position:absolute;left:0;top:59px;width:1234px;height:1px;background:#4a4a52"></div>
<div style="position:absolute;left:4px;top:41.5px;width:14px;height:14px;border:1.5px solid #f0b400;box-sizing:border-box"></div>
<div style="position:absolute;left:7.8px;top:45.9px;width:6.4px;height:6.4px;border-radius:50%;background:#f5c000"></div>
<div class="m" style="left:29px;top:43px;color:#f0f0f0">0x00C0 - 0x00C1</div>
<div class="m" style="left:143px;top:43px;color:#f0f0f0">0x00C0 - 0x00C1</div>
<div class="m" style="left:266.5px;top:43px;color:#a8a8a8">00</div>
<div class="m" style="left:287.5px;top:43px;color:#a8a8a8">00</div>
<svg style="left:317.0px;top:44px" width="13" height="12"><path d="M0.5 6h11 M6 0.8l5.3 5.2-5.3 5.2" fill="none" stroke="#ececec" stroke-width="1.05"/></svg>
<div class="m" style="left:345.5px;top:43px;color:#a8a8a8">02</div>
<div class="m" style="left:366.5px;top:43px;color:#a8a8a8">FF</div>
<div style="position:absolute;left:0;top:79px;width:1234px;height:1px;background:#4a4a52"></div>
<div style="position:absolute;left:4px;top:61.5px;width:14px;height:14px;border:1.5px solid #f0b400;box-sizing:border-box"></div>
<div style="position:absolute;left:7.8px;top:65.9px;width:6.4px;height:6.4px;border-radius:50%;background:#f5c000"></div>
<div class="m" style="left:29px;top:63px;color:#f0f0f0">0x00C3 - 0x00C3</div>
<div class="m" style="left:143px;top:63px;color:#f0f0f0">0x00C3 - 0x00C3</div>
<div class="m" style="left:266.5px;top:63px;color:#a8a8a8">00</div>
<svg style="left:296.0px;top:64px" width="13" height="12"><path d="M0.5 6h11 M6 0.8l5.3 5.2-5.3 5.2" fill="none" stroke="#ececec" stroke-width="1.05"/></svg>
<div class="m" style="left:324.5px;top:63px;color:#a8a8a8">02</div>
<div style="position:absolute;left:0;top:99px;width:1234px;height:1px;background:#4a4a52"></div>
<div style="position:absolute;left:4px;top:81.5px;width:14px;height:14px;border:1.5px solid #f0b400;box-sizing:border-box"></div>
<div style="position:absolute;left:7.8px;top:85.9px;width:6.4px;height:6.4px;border-radius:50%;background:#f5c000"></div>
<div class="m" style="left:29px;top:83px;color:#f0f0f0">0x00E0 - 0x00E0</div>
<div class="m" style="left:143px;top:83px;color:#f0f0f0">0x00E0 - 0x00E0</div>
<div class="m" style="left:266.5px;top:83px;color:#a8a8a8">05</div>
<svg style="left:296.0px;top:84px" width="13" height="12"><path d="M0.5 6h11 M6 0.8l5.3 5.2-5.3 5.2" fill="none" stroke="#ececec" stroke-width="1.05"/></svg>
<div class="m" style="left:324.5px;top:83px;color:#a8a8a8">02</div>
<div style="position:absolute;left:0;top:119px;width:1234px;height:1px;background:#4a4a52"></div>
<div style="position:absolute;left:4px;top:101.5px;width:14px;height:14px;border:1.5px solid #f0b400;box-sizing:border-box"></div>
<div style="position:absolute;left:7.8px;top:105.9px;width:6.4px;height:6.4px;border-radius:50%;background:#f5c000"></div>
<div class="m" style="left:29px;top:103px;color:#f0f0f0">0x00E2 - 0x00E2</div>
<div class="m" style="left:143px;top:103px;color:#f0f0f0">0x00E2 - 0x00E2</div>
<div class="m" style="left:266.5px;top:103px;color:#a8a8a8">05</div>
<svg style="left:296.0px;top:104px" width="13" height="12"><path d="M0.5 6h11 M6 0.8l5.3 5.2-5.3 5.2" fill="none" stroke="#ececec" stroke-width="1.05"/></svg>
<div class="m" style="left:324.5px;top:103px;color:#a8a8a8">02</div>
<div style="position:absolute;left:0;top:139px;width:1234px;height:1px;background:#4a4a52"></div>
<div style="position:absolute;left:4px;top:121.5px;width:14px;height:14px;border:1.5px solid #f0b400;box-sizing:border-box"></div>
<div style="position:absolute;left:7.8px;top:125.9px;width:6.4px;height:6.4px;border-radius:50%;background:#f5c000"></div>
<div class="m" style="left:29px;top:123px;color:#f0f0f0">0x0100 - 0x010B</div>
<div class="m" style="left:143px;top:123px;color:#f0f0f0">0x0100 - 0x010B</div>
<div class="m" style="left:266.5px;top:123px;color:#a8a8a8">00</div>
<div class="m" style="left:287.5px;top:123px;color:#a8a8a8">00</div>
<div class="m" style="left:308.5px;top:123px;color:#a8a8a8">00</div>
<div class="m" style="left:329.5px;top:123px;color:#a8a8a8">00</div>
<div class="m" style="left:354.5px;top:123px;color:#a8a8a8">00</div>
<div class="m" style="left:375.5px;top:123px;color:#a8a8a8">00</div>
<div class="m" style="left:396.5px;top:123px;color:#a8a8a8">00</div>
<div class="m" style="left:417.5px;top:123px;color:#a8a8a8">00</div>
<div class="m" style="left:442.5px;top:123px;color:#a8a8a8">00</div>
<div class="m" style="left:463.5px;top:123px;color:#a8a8a8">00</div>
<div class="m" style="left:484.5px;top:123px;color:#a8a8a8">00</div>
<div class="m" style="left:505.5px;top:123px;color:#a8a8a8">00</div>
<svg style="left:535.0px;top:124px" width="13" height="12"><path d="M0.5 6h11 M6 0.8l5.3 5.2-5.3 5.2" fill="none" stroke="#ececec" stroke-width="1.05"/></svg>
<div class="m" style="left:563.5px;top:123px;color:#a8a8a8">A5</div>
<div class="m" style="left:584.5px;top:123px;color:#a8a8a8">5A</div>
<div class="m" style="left:605.5px;top:123px;color:#a8a8a8">A5</div>
<div class="m" style="left:626.5px;top:123px;color:#a8a8a8">5A</div>
<div class="m" style="left:651.5px;top:123px;color:#a8a8a8">A5</div>
<div class="m" style="left:672.5px;top:123px;color:#a8a8a8">5A</div>
<div class="m" style="left:693.5px;top:123px;color:#a8a8a8">5A</div>
<div class="m" style="left:714.5px;top:123px;color:#a8a8a8">A5</div>
<div class="m" style="left:739.5px;top:123px;color:#a8a8a8">5A</div>
<div class="m" style="left:760.5px;top:123px;color:#a8a8a8">A5</div>
<div class="m" style="left:781.5px;top:123px;color:#a8a8a8">5A</div>
<div class="m" style="left:802.5px;top:123px;color:#a8a8a8">A5</div>
<div style="position:absolute;left:0;top:159px;width:1234px;height:1px;background:#4a4a52"></div>
<div style="position:absolute;left:4px;top:141.5px;width:14px;height:14px;border:1.5px solid #f0b400;box-sizing:border-box"></div>
<div style="position:absolute;left:7.8px;top:145.9px;width:6.4px;height:6.4px;border-radius:50%;background:#f5c000"></div>
<div class="m" style="left:29px;top:143px;color:#f0f0f0">0x010D - 0x010D</div>
<div class="m" style="left:143px;top:143px;color:#f0f0f0">0x010D - 0x010D</div>
<div class="m" style="left:266.5px;top:143px;color:#a8a8a8">00</div>
<svg style="left:296.0px;top:144px" width="13" height="12"><path d="M0.5 6h11 M6 0.8l5.3 5.2-5.3 5.2" fill="none" stroke="#ececec" stroke-width="1.05"/></svg>
<div class="m" style="left:324.5px;top:143px;color:#a8a8a8">F4</div>
<div style="position:absolute;left:0;top:179px;width:1234px;height:1px;background:#4a4a52"></div>
<div style="position:absolute;left:4px;top:161.5px;width:14px;height:14px;border:1.5px solid #f0b400;box-sizing:border-box"></div>
<div style="position:absolute;left:7.8px;top:165.9px;width:6.4px;height:6.4px;border-radius:50%;background:#f5c000"></div>
<div class="m" style="left:29px;top:163px;color:#f0f0f0">0x010F - 0x010F</div>
<div class="m" style="left:143px;top:163px;color:#f0f0f0">0x010F - 0x010F</div>
<div class="m" style="left:266.5px;top:163px;color:#a8a8a8">00</div>
<svg style="left:296.0px;top:164px" width="13" height="12"><path d="M0.5 6h11 M6 0.8l5.3 5.2-5.3 5.2" fill="none" stroke="#ececec" stroke-width="1.05"/></svg>
<div class="m" style="left:324.5px;top:163px;color:#a8a8a8">F4</div>
<div style="position:absolute;left:0;top:199px;width:1234px;height:1px;background:#4a4a52"></div>
<div style="position:absolute;left:4px;top:181.5px;width:14px;height:14px;border:1.5px solid #f0b400;box-sizing:border-box"></div>
<div style="position:absolute;left:7.8px;top:185.9px;width:6.4px;height:6.4px;border-radius:50%;background:#f5c000"></div>
<div class="m" style="left:29px;top:183px;color:#f0f0f0">0x0111 - 0x0117</div>
<div class="m" style="left:143px;top:183px;color:#f0f0f0">0x0111 - 0x0117</div>
<div class="m" style="left:266.5px;top:183px;color:#a8a8a8">00</div>
<div class="m" style="left:287.5px;top:183px;color:#a8a8a8">00</div>
<div class="m" style="left:308.5px;top:183px;color:#a8a8a8">00</div>
<div class="m" style="left:329.5px;top:183px;color:#a8a8a8">00</div>
<div class="m" style="left:354.5px;top:183px;color:#a8a8a8">00</div>
<div class="m" style="left:375.5px;top:183px;color:#a8a8a8">00</div>
<div class="m" style="left:396.5px;top:183px;color:#a8a8a8">00</div>
<svg style="left:426.0px;top:184px" width="13" height="12"><path d="M0.5 6h11 M6 0.8l5.3 5.2-5.3 5.2" fill="none" stroke="#ececec" stroke-width="1.05"/></svg>
<div class="m" style="left:454.5px;top:183px;color:#a8a8a8">F4</div>
<div class="m" style="left:475.5px;top:183px;color:#a8a8a8">1D</div>
<div class="m" style="left:496.5px;top:183px;color:#a8a8a8">FF</div>
<div class="m" style="left:517.5px;top:183px;color:#a8a8a8">1D</div>
<div class="m" style="left:542.5px;top:183px;color:#a8a8a8">FF</div>
<div class="m" style="left:563.5px;top:183px;color:#a8a8a8">1D</div>
<div class="m" style="left:584.5px;top:183px;color:#a8a8a8">FF</div>
<div style="position:absolute;left:0;top:219px;width:1234px;height:1px;background:#4a4a52"></div>
<div style="position:absolute;left:4px;top:201.5px;width:14px;height:14px;border:1.5px solid #f0b400;box-sizing:border-box"></div>
<div style="position:absolute;left:7.8px;top:205.9px;width:6.4px;height:6.4px;border-radius:50%;background:#f5c000"></div>
<div class="m" style="left:29px;top:203px;color:#f0f0f0">0x011E - 0x0123</div>
<div class="m" style="left:143px;top:203px;color:#f0f0f0">0x011E - 0x0123</div>
<div class="m" style="left:266.5px;top:203px;color:#a8a8a8">00</div>
<div class="m" style="left:287.5px;top:203px;color:#a8a8a8">00</div>
<div class="m" style="left:308.5px;top:203px;color:#a8a8a8">00</div>
<div class="m" style="left:329.5px;top:203px;color:#a8a8a8">00</div>
<div class="m" style="left:354.5px;top:203px;color:#a8a8a8">00</div>
<div class="m" style="left:375.5px;top:203px;color:#a8a8a8">00</div>
<svg style="left:405.0px;top:204px" width="13" height="12"><path d="M0.5 6h11 M6 0.8l5.3 5.2-5.3 5.2" fill="none" stroke="#ececec" stroke-width="1.05"/></svg>
<div class="m" style="left:433.5px;top:203px;color:#a8a8a8">B3</div>
<div class="m" style="left:454.5px;top:203px;color:#a8a8a8">FF</div>
<div class="m" style="left:475.5px;top:203px;color:#a8a8a8">B3</div>
<div class="m" style="left:496.5px;top:203px;color:#a8a8a8">FF</div>
<div class="m" style="left:521.5px;top:203px;color:#a8a8a8">B3</div>
<div class="m" style="left:542.5px;top:203px;color:#a8a8a8">FF</div>
</div>
</div></body></html>
